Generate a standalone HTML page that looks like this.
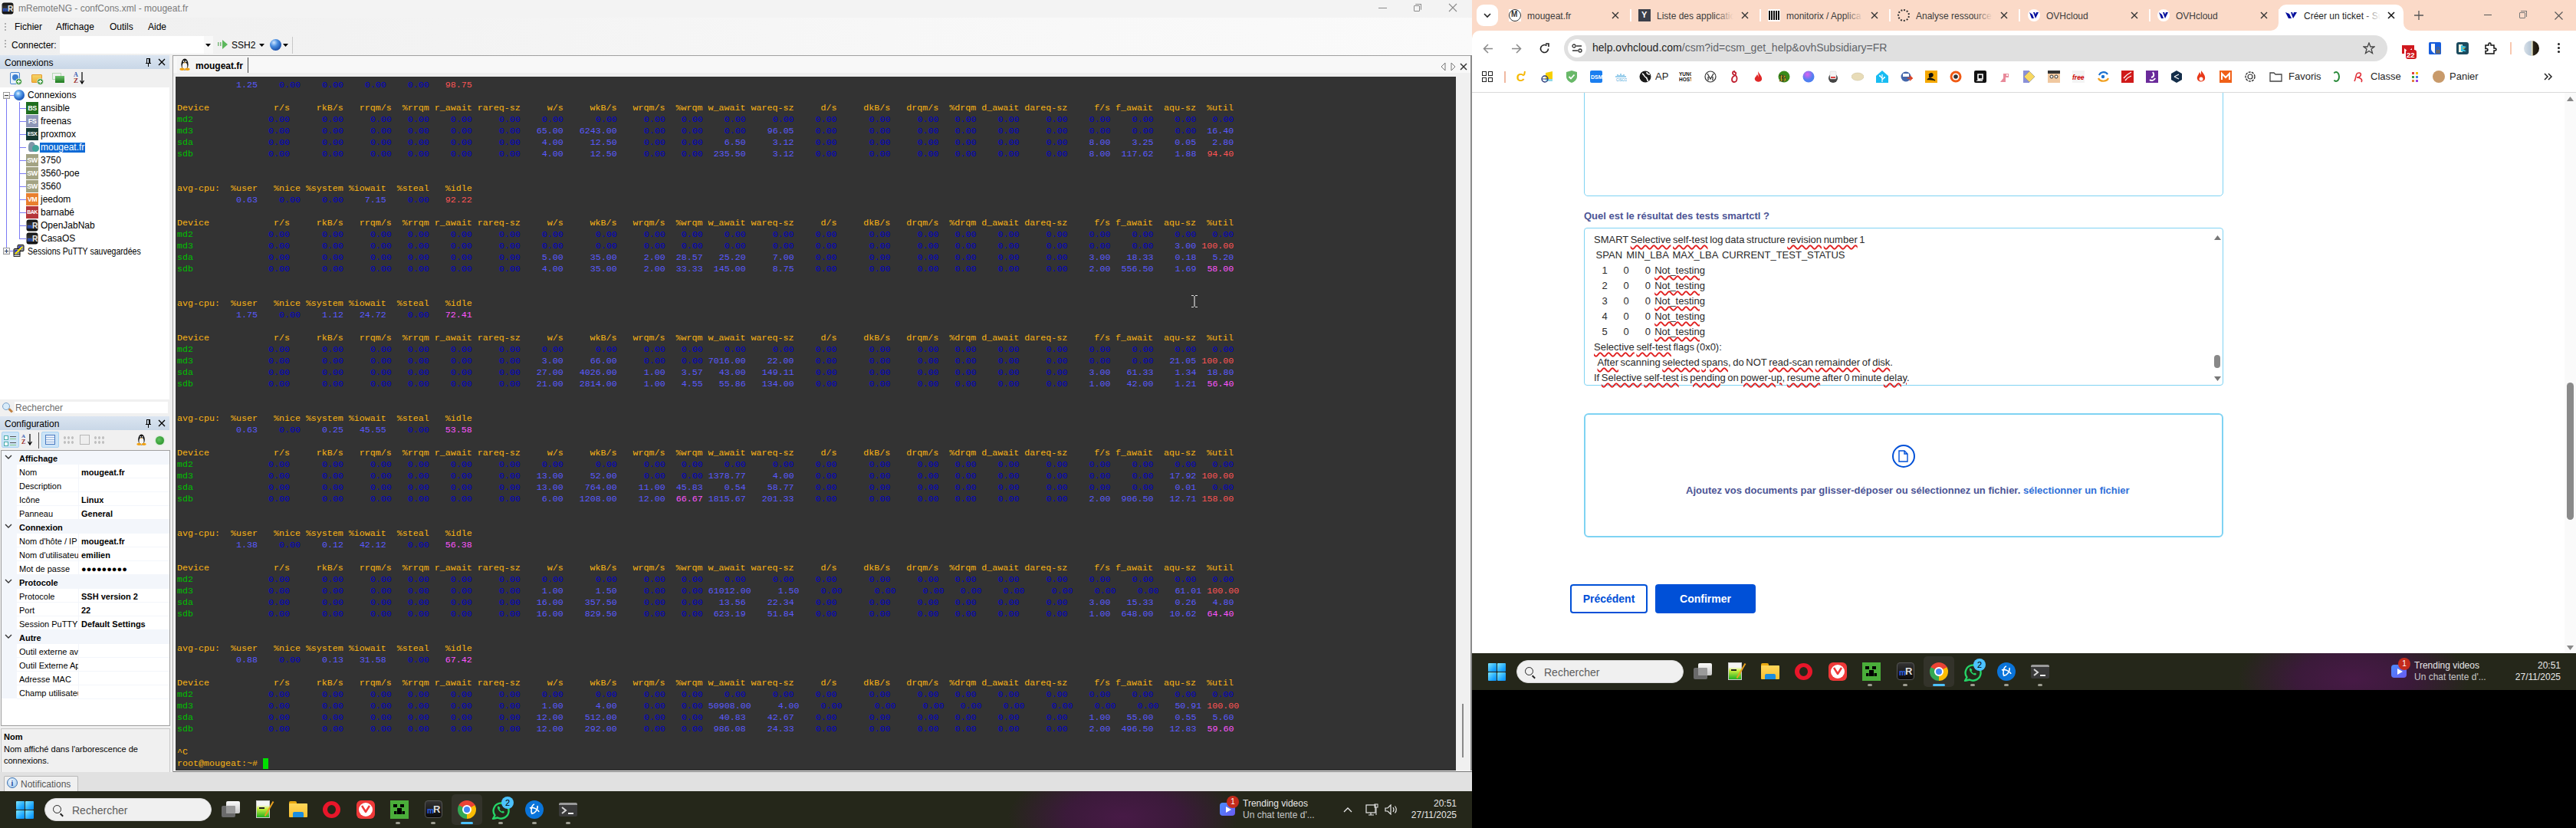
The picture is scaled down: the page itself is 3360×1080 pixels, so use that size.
<!DOCTYPE html>
<html><head><meta charset="utf-8">
<style>
*{margin:0;padding:0;box-sizing:border-box}
html,body{width:3360px;height:1080px;overflow:hidden;background:#000;font-family:"Liberation Sans",sans-serif;font-size:12px;color:#000}
.a{position:absolute}
.t{position:absolute;white-space:nowrap;line-height:1}
#L{position:absolute;left:0;top:0;width:1920px;height:1080px;background:#f0f0f0;overflow:hidden}
#R{position:absolute;left:1920px;top:0;width:1440px;height:1080px;background:#000;overflow:hidden}
#term{position:absolute;left:229px;top:100px;width:1670px;height:905px;background:#333;overflow:hidden}
.tl{position:absolute;left:2px;height:15px;line-height:15px;white-space:pre;font-family:"Liberation Mono",monospace;font-size:11.667px;color:#fab414}
.tl i{font-style:normal}
i.y{color:#fab414} i.g{color:#00c000} i.z{color:#0000c8} i.b{color:#5a5aff} i.m{color:#ff55ff} i.r{color:#ff5555}
i.cur{background:#00e000}
.ico{position:absolute;width:16px;height:16px;color:#fff;font-weight:bold;font-size:9px;line-height:16px;text-align:center;letter-spacing:-0.5px;font-family:"Liberation Sans",sans-serif}
.tr{position:absolute;font-size:12px;white-space:nowrap;line-height:17px;height:17px}
.pg{position:absolute;font-size:11px;white-space:nowrap;line-height:17px;height:17px;overflow:hidden;padding-top:2px}
.pb{font-weight:bold}
.tb{position:absolute;width:24px;height:24px}
.ta{font-size:13px;color:#2a2a2a;white-space:pre;word-spacing:-1px;line-height:16px}
.ta u{text-decoration:underline wavy #e02020;text-decoration-thickness:1.5px;text-underline-offset:2px}
</style></head><body>
<div id="L">
  <!-- title bar -->
  <div class="a" style="left:0;top:0;width:1920px;height:23px;background:#f3f3f3"></div>
  <svg class="a" style="left:2px;top:3px" width="16" height="16"><defs><linearGradient id="mrt" x1="0" y1="0" x2="0" y2="1"><stop offset="0" stop-color="#111"/><stop offset="0.5" stop-color="#3a3a3a"/><stop offset="1" stop-color="#0a0a0a"/></linearGradient></defs><rect x="0.5" y="0.5" width="15" height="15" rx="3" fill="url(#mrt)"/><text x="2" y="12" font-size="7" font-weight="bold" fill="#2a60f0" font-family="Liberation Sans">m</text><text x="8" y="12" font-size="10" font-weight="bold" fill="#e8e8e8" font-family="Liberation Sans">R</text></svg>
  <div class="t" style="left:24px;top:5px;font-size:12px;color:#7a7a7a">mRemoteNG - confCons.xml - mougeat.fr</div>
  <div class="a" style="left:1798px;top:10px;width:11px;height:1px;background:#8a8a8a"></div>
  <div class="a" style="left:1844px;top:7px;width:8px;height:8px;border:1px solid #8a8a8a;border-radius:1px"></div>
  <div class="a" style="left:1846px;top:5px;width:8px;height:8px;border-top:1px solid #8a8a8a;border-right:1px solid #8a8a8a;border-radius:1px"></div>
  <svg class="a" style="left:1889px;top:4px" width="12" height="12"><path d="M1 1L11 11M11 1L1 11" stroke="#8a8a8a" stroke-width="1.1"/></svg>
  <!-- menu + toolbar bg -->
  <div class="a" style="left:0;top:23px;width:1920px;height:49px;background:linear-gradient(90deg,#efefef 0%,#f3f3f3 30%,#f7f7f7 60%,#fafafa 100%)"></div>
  <div class="a" style="left:6px;top:30px;width:2px;height:12px;background:repeating-linear-gradient(180deg,#b0b0b0 0 2px,transparent 2px 4px)"></div>
  <div class="t" style="left:19px;top:29px;font-size:12px">Fichier</div>
  <div class="t" style="left:73px;top:29px;font-size:12px">Affichage</div>
  <div class="t" style="left:143px;top:29px;font-size:12px">Outils</div>
  <div class="t" style="left:193px;top:29px;font-size:12px">Aide</div>
  <div class="a" style="left:6px;top:52px;width:2px;height:12px;background:repeating-linear-gradient(180deg,#b0b0b0 0 2px,transparent 2px 4px)"></div>
  <div class="t" style="left:15px;top:53px;font-size:12px">Connecter:</div>
  <div class="a" style="left:78px;top:47px;width:188px;height:23px;background:#fff"></div>
  <div class="a" style="left:266px;top:47px;width:12px;height:23px;background:#f8f8f8"></div>
  <svg class="a" style="left:268px;top:57px" width="8" height="5"><path d="M0 0H7L3.5 4Z" fill="#000"/></svg>
  <svg class="a" style="left:284px;top:52px" width="14" height="12"><rect x="0" y="3" width="1.5" height="5" fill="#7ab87a"/><rect x="3" y="3" width="1.5" height="5" fill="#7ab87a"/><path d="M6 0L13 6L6 12Z" fill="#5cb85c"/></svg>
  <div class="t" style="left:302px;top:53px;font-size:12px">SSH2</div>
  <svg class="a" style="left:338px;top:57px" width="8" height="5"><path d="M0 0H7L3.5 4Z" fill="#000"/></svg>
  <div class="a" style="left:352px;top:51px;width:15px;height:15px;border-radius:50%;background:radial-gradient(circle at 35% 30%,#cfe6ff 0%,#4a8ee0 35%,#1b4fa8 75%,#0d2f70 100%)"></div>
  <svg class="a" style="left:369px;top:57px" width="8" height="5"><path d="M0 0H7L3.5 4Z" fill="#000"/></svg>
  <div class="a" style="left:381px;top:48px;width:1px;height:22px;background:#c8c8c8"></div>
<div class="a" style="left:0;top:72px;width:221px;height:18px;background:linear-gradient(180deg,#dbe5f1,#c9d7e7)"></div>
<div class="t" style="left:6px;top:76px;font-size:12px">Connexions</div>
<svg class="a" style="left:189px;top:76px" width="9" height="11"><path d="M2 0H7V6H8V7H5V11H4V7H1V6H2Z" fill="#000"/><rect x="3" y="1" width="2" height="5" fill="#d0dcea"/></svg>
<svg class="a" style="left:206px;top:76px" width="10" height="10"><path d="M1 1L9 9M9 1L1 9" stroke="#000" stroke-width="1.3"/></svg>
<div class="a" style="left:0;top:90px;width:221px;height:24px;background:#f0f0f0"></div>
<div class="a" style="left:13px;top:94px;width:13px;height:16px;border:1.5px solid #4a86d0;border-radius:2px;background:#e6f0fb"></div>
<div class="a" style="left:16px;top:97px;width:8px;height:8px;border-radius:50%;background:#3d7fd0"></div>
<svg class="a" style="left:20px;top:102px" width="9" height="9"><circle cx="4.5" cy="4.5" r="4" fill="#2e8b2e" stroke="#fff" stroke-width="0.8"/><path d="M4.5 2V7M2 4.5H7" stroke="#fff" stroke-width="1.3"/></svg>
<div class="a" style="left:41px;top:97px;width:14px;height:11px;background:linear-gradient(180deg,#f5d36a,#eeb43a);border:1px solid #e59a2a;border-radius:1px"></div>
<svg class="a" style="left:48px;top:102px" width="9" height="9"><circle cx="4.5" cy="4.5" r="4" fill="#2e8b2e" stroke="#fff" stroke-width="0.8"/><path d="M4.5 2V7M2 4.5H7" stroke="#fff" stroke-width="1.3"/></svg>
<div class="a" style="left:68px;top:95px;width:12px;height:9px;border:1px solid #b5d8b5"></div>
<div class="a" style="left:72px;top:99px;width:12px;height:9px;background:linear-gradient(180deg,#6cc06c,#1f7a1f)"></div>
<div class="t" style="left:96px;top:94px;font-size:8px;font-weight:bold;color:#3558b0;font-family:'Liberation Serif',serif">A</div>
<div class="t" style="left:96px;top:101px;font-size:9px;font-weight:bold;color:#9a3030;font-family:'Liberation Serif',serif">Z</div>
<svg class="a" style="left:104px;top:94px" width="6" height="16"><path d="M3 0V14M0.5 11L3 15L5.5 11" stroke="#000" stroke-width="1.2" fill="none"/></svg>
<div class="a" style="left:0;top:114px;width:221px;height:407px;background:#fff"></div>
<div class="a" style="left:8px;top:128px;width:1px;height:195px;background:#7b7bf5"></div>
<div class="a" style="left:13px;top:124px;width:5px;height:1px;background:#7b7bf5"></div>
<div class="a" style="left:25px;top:133px;width:1px;height:179px;background:#7b7bf5"></div>
<div class="a" style="left:25px;top:141px;width:9px;height:1px;background:#7b7bf5"></div>
<div class="a" style="left:25px;top:158px;width:9px;height:1px;background:#7b7bf5"></div>
<div class="a" style="left:25px;top:175px;width:9px;height:1px;background:#7b7bf5"></div>
<div class="a" style="left:25px;top:192px;width:9px;height:1px;background:#7b7bf5"></div>
<div class="a" style="left:25px;top:209px;width:9px;height:1px;background:#7b7bf5"></div>
<div class="a" style="left:25px;top:226px;width:9px;height:1px;background:#7b7bf5"></div>
<div class="a" style="left:25px;top:243px;width:9px;height:1px;background:#7b7bf5"></div>
<div class="a" style="left:25px;top:260px;width:9px;height:1px;background:#7b7bf5"></div>
<div class="a" style="left:25px;top:277px;width:9px;height:1px;background:#7b7bf5"></div>
<div class="a" style="left:25px;top:294px;width:9px;height:1px;background:#7b7bf5"></div>
<div class="a" style="left:25px;top:311px;width:9px;height:1px;background:#7b7bf5"></div>
<div class="a" style="left:13px;top:327px;width:4px;height:1px;background:#7b7bf5"></div>
<div class="a" style="left:4px;top:120px;width:9px;height:9px;border:1px solid #999;background:linear-gradient(180deg,#fff,#e4e4e4)"></div><div class="a" style="left:6px;top:124px;width:5px;height:1px;background:#333"></div>
<div class="a" style="left:4px;top:323px;width:9px;height:9px;border:1px solid #999;background:linear-gradient(180deg,#fff,#e4e4e4)"></div><div class="a" style="left:6px;top:327px;width:5px;height:1px;background:#333"></div><div class="a" style="left:8px;top:325px;width:1px;height:5px;background:#2a4a8a"></div>
<div class="a" style="left:18px;top:117px;width:14px;height:14px;border-radius:50%;background:radial-gradient(circle at 40% 35%,#e8f4ff 0%,#6aaef0 25%,#2767c8 60%,#0d3a8a 100%)"></div>
<div class="tr" style="left:36px;top:116px">Connexions</div>
<div class="ico" style="left:34px;top:133px;background:#1f6e1f;font-size:9px">BS</div>
<div class="tr" style="left:53px;top:133px">ansible</div>
<div class="ico" style="left:34px;top:150px;background:#8d96b8;font-size:9px">FS</div>
<div class="tr" style="left:53px;top:150px">freenas</div>
<div class="ico" style="left:34px;top:167px;background:#163a33;font-size:7px">ESX</div>
<div class="tr" style="left:53px;top:167px">proxmox</div>
<div class="a" style="left:37px;top:185px;width:9px;height:13px;border-radius:45% 45% 30% 30%;background:#7f96a8"></div>
<div class="a" style="left:42px;top:189px;width:9px;height:9px;border-radius:50%;background:#3fa59a"></div>
<div class="a" style="left:52px;top:186px;width:59px;height:13px;background:#0c6ad6"></div>
<div class="tr" style="left:53px;top:184px;color:#fff">mougeat.fr</div>
<div class="ico" style="left:34px;top:201px;background:#a3a383;font-size:9px">SW</div>
<div class="tr" style="left:53px;top:201px">3750</div>
<div class="ico" style="left:34px;top:218px;background:#a3a383;font-size:9px">SW</div>
<div class="tr" style="left:53px;top:218px">3560-poe</div>
<div class="ico" style="left:34px;top:235px;background:#a3a383;font-size:9px">SW</div>
<div class="tr" style="left:53px;top:235px">3560</div>
<div class="ico" style="left:34px;top:252px;background:#e97f2e;font-size:9px">VM</div>
<div class="tr" style="left:53px;top:252px">jeedom</div>
<div class="ico" style="left:34px;top:269px;background:#b5363a;font-size:7px">BAK</div>
<div class="tr" style="left:53px;top:269px">barnabé</div>
<svg class="a" style="left:34px;top:286px" width="16" height="16"><defs><linearGradient id="mrg10" x1="0" y1="0" x2="0" y2="1"><stop offset="0" stop-color="#111"/><stop offset="0.5" stop-color="#3a3a3a"/><stop offset="1" stop-color="#0a0a0a"/></linearGradient></defs><rect x="0.5" y="0.5" width="15" height="15" rx="3" fill="url(#mrg10)"/><text x="2" y="12" font-size="7" font-weight="bold" fill="#2a60f0" font-family="Liberation Sans">m</text><text x="8" y="12" font-size="10" font-weight="bold" fill="#e8e8e8" font-family="Liberation Sans">R</text></svg>
<div class="tr" style="left:53px;top:286px">OpenJabNab</div>
<svg class="a" style="left:34px;top:303px" width="16" height="16"><defs><linearGradient id="mrg11" x1="0" y1="0" x2="0" y2="1"><stop offset="0" stop-color="#111"/><stop offset="0.5" stop-color="#3a3a3a"/><stop offset="1" stop-color="#0a0a0a"/></linearGradient></defs><rect x="0.5" y="0.5" width="15" height="15" rx="3" fill="url(#mrg11)"/><text x="2" y="12" font-size="7" font-weight="bold" fill="#2a60f0" font-family="Liberation Sans">m</text><text x="8" y="12" font-size="10" font-weight="bold" fill="#e8e8e8" font-family="Liberation Sans">R</text></svg>
<div class="tr" style="left:53px;top:303px">CasaOS</div>
<svg class="a" style="left:17px;top:319px" width="17" height="16"><rect x="6" y="0.5" width="8" height="8" rx="1" fill="#999" stroke="#000" stroke-width="1"/><rect x="7.5" y="2" width="4.5" height="4" fill="#1a2ad8"/><rect x="1" y="5.5" width="8" height="8" rx="1" fill="#999" stroke="#000" stroke-width="1"/><rect x="2.5" y="7" width="4.5" height="4" fill="#1a2ad8"/><rect x="1" y="13" width="8" height="2.5" fill="#ddd" stroke="#000" stroke-width="0.8"/><path d="M3 12L12 3" stroke="#f8e800" stroke-width="2.2"/></svg>
<div class="tr" style="left:36px;top:320px;transform:scaleX(0.88);transform-origin:0 0">Sessions PuTTY sauvegardées</div>
<div class="a" style="left:0;top:521px;width:221px;height:22px;background:#f0f0f0"></div>
<div class="a" style="left:3px;top:525px;width:10px;height:10px;border-radius:50%;border:1.5px solid #7aa0c8;background:#d8ecfa"></div>
<div class="a" style="left:11px;top:534px;width:6px;height:2.5px;background:#c08040;transform:rotate(45deg)"></div>
<div class="a" style="left:19px;top:524px;width:200px;height:15px;background:#fff"></div>
<div class="t" style="left:20px;top:526px;font-size:12px;color:#6d6d6d">Rechercher</div>
<div class="a" style="left:0;top:543px;width:221px;height:18px;background:linear-gradient(180deg,#dbe5f1,#c9d7e7)"></div>
<div class="t" style="left:6px;top:547px;font-size:12px">Configuration</div>
<svg class="a" style="left:189px;top:547px" width="9" height="11"><path d="M2 0H7V6H8V7H5V11H4V7H1V6H2Z" fill="#000"/><rect x="3" y="1" width="2" height="5" fill="#d0dcea"/></svg>
<svg class="a" style="left:206px;top:547px" width="10" height="10"><path d="M1 1L9 9M9 1L1 9" stroke="#000" stroke-width="1.3"/></svg>
<div class="a" style="left:0;top:561px;width:221px;height:26px;background:#f0f0f0"></div>
<div class="a" style="left:2px;top:563px;width:23px;height:21px;background:#cce4f7;border:1px solid #a8d2f2;border-radius:2px"></div>
<div class="a" style="left:5px;top:568px;width:6px;height:6px;border:1px solid #4aa;background:#fff"></div>
<div class="a" style="left:13px;top:569px;width:8px;height:1px;background:#555"></div>
<div class="a" style="left:13px;top:572px;width:8px;height:1px;background:#8c8"></div>
<div class="a" style="left:5px;top:576px;width:6px;height:6px;border:1px solid #4aa;background:#fff"></div>
<div class="a" style="left:13px;top:577px;width:8px;height:1px;background:#555"></div>
<div class="a" style="left:13px;top:580px;width:8px;height:1px;background:#8c8"></div>
<div class="t" style="left:28px;top:566px;font-size:7px;font-weight:bold;color:#3558b0;font-family:'Liberation Serif',serif">A</div>
<div class="t" style="left:28px;top:573px;font-size:8px;font-weight:bold;color:#9a3030;font-family:'Liberation Serif',serif">Z</div>
<svg class="a" style="left:36px;top:566px" width="6" height="16"><path d="M3 0V13M0.5 10L3 14L5.5 10" stroke="#000" stroke-width="1.2" fill="none"/></svg>
<div class="a" style="left:50px;top:564px;width:1px;height:21px;background:#555"></div>
<div class="a" style="left:54px;top:563px;width:23px;height:21px;background:#cce4f7;border:1px solid #a8d2f2;border-radius:2px"></div>
<div class="a" style="left:59px;top:567px;width:13px;height:13px;border:1px solid #4a7ac0;background:repeating-linear-gradient(180deg,#e8f0fa 0 2px,#9ab8e0 2px 3px)"></div>
<div class="a" style="left:82px;top:568px;width:15px;height:12px;opacity:.45;background:radial-gradient(circle,#888 1.5px,transparent 2px) 0 0/5px 6px"></div>
<div class="a" style="left:104px;top:567px;width:13px;height:13px;border:1px solid #aaa;background:#eee;opacity:.8"></div>
<div class="a" style="left:122px;top:568px;width:15px;height:12px;opacity:.45;background:radial-gradient(circle,#888 1.5px,transparent 2px) 0 0/5px 6px"></div>
<svg class="a" style="left:178px;top:566px" width="13" height="15" viewBox="0 0 14 16"><ellipse cx="7" cy="8" rx="4.6" ry="7.6" fill="#151515"/><ellipse cx="7" cy="10.2" rx="3.3" ry="4.8" fill="#f4f4f4"/><circle cx="5.6" cy="4" r="0.9" fill="#fff"/><circle cx="8.4" cy="4" r="0.9" fill="#fff"/><path d="M5.6 5.6H8.4L7 7Z" fill="#f0a010"/><ellipse cx="3.6" cy="14.3" rx="3.2" ry="1.7" fill="#f0a010"/><ellipse cx="10.4" cy="14.3" rx="3.2" ry="1.7" fill="#f0a010"/></svg>
<div class="a" style="left:203px;top:569px;width:11px;height:11px;border-radius:50%;background:radial-gradient(circle at 40% 40%,#5fc05f,#1f8a1f);box-shadow:0 0 2px #8d8"></div>
<div class="a" style="left:1px;top:587px;width:221px;height:360px;background:#fff;border:1px solid #a0a0a0"></div>
<div class="a" style="left:2px;top:588px;width:20px;height:323px;background:#f3f6fb"></div>
<div class="a" style="left:2px;top:588px;width:219px;height:18px;background:#f3f6fb"></div>
<svg class="a" style="left:6px;top:593px" width="10" height="6"><path d="M1 1L5 5L9 1" stroke="#333" stroke-width="1.4" fill="none"/></svg>
<div class="pg pb" style="left:25px;top:588px;font-size:11px">Affichage</div>
<div class="a" style="left:22px;top:623px;width:199px;height:1px;background:#f3f6fb"></div>
<div class="a" style="left:102px;top:606px;width:1px;height:17px;background:#f3f6fb"></div>
<div class="pg" style="left:25px;top:606px;width:77px">Nom</div>
<div class="pg pb" style="left:106px;top:606px">mougeat.fr</div>
<div class="a" style="left:22px;top:641px;width:199px;height:1px;background:#f3f6fb"></div>
<div class="a" style="left:102px;top:624px;width:1px;height:17px;background:#f3f6fb"></div>
<div class="pg" style="left:25px;top:624px;width:77px">Description</div>
<div class="a" style="left:22px;top:659px;width:199px;height:1px;background:#f3f6fb"></div>
<div class="a" style="left:102px;top:642px;width:1px;height:17px;background:#f3f6fb"></div>
<div class="pg" style="left:25px;top:642px;width:77px">Icône</div>
<div class="pg pb" style="left:106px;top:642px">Linux</div>
<div class="a" style="left:22px;top:677px;width:199px;height:1px;background:#f3f6fb"></div>
<div class="a" style="left:102px;top:660px;width:1px;height:17px;background:#f3f6fb"></div>
<div class="pg" style="left:25px;top:660px;width:77px">Panneau</div>
<div class="pg pb" style="left:106px;top:660px">General</div>
<div class="a" style="left:2px;top:678px;width:219px;height:18px;background:#f3f6fb"></div>
<svg class="a" style="left:6px;top:683px" width="10" height="6"><path d="M1 1L5 5L9 1" stroke="#333" stroke-width="1.4" fill="none"/></svg>
<div class="pg pb" style="left:25px;top:678px;font-size:11px">Connexion</div>
<div class="a" style="left:22px;top:713px;width:199px;height:1px;background:#f3f6fb"></div>
<div class="a" style="left:102px;top:696px;width:1px;height:17px;background:#f3f6fb"></div>
<div class="pg" style="left:25px;top:696px;width:77px">Nom d'hôte / IP</div>
<div class="pg pb" style="left:106px;top:696px">mougeat.fr</div>
<div class="a" style="left:22px;top:731px;width:199px;height:1px;background:#f3f6fb"></div>
<div class="a" style="left:102px;top:714px;width:1px;height:17px;background:#f3f6fb"></div>
<div class="pg" style="left:25px;top:714px;width:77px">Nom d'utilisateur</div>
<div class="pg pb" style="left:106px;top:714px">emilien</div>
<div class="a" style="left:22px;top:749px;width:199px;height:1px;background:#f3f6fb"></div>
<div class="a" style="left:102px;top:732px;width:1px;height:17px;background:#f3f6fb"></div>
<div class="pg" style="left:25px;top:732px;width:77px">Mot de passe</div>
<div class="pg pb" style="left:106px;top:732px">●●●●●●●●●</div>
<div class="a" style="left:2px;top:750px;width:219px;height:18px;background:#f3f6fb"></div>
<svg class="a" style="left:6px;top:755px" width="10" height="6"><path d="M1 1L5 5L9 1" stroke="#333" stroke-width="1.4" fill="none"/></svg>
<div class="pg pb" style="left:25px;top:750px;font-size:11px">Protocole</div>
<div class="a" style="left:22px;top:785px;width:199px;height:1px;background:#f3f6fb"></div>
<div class="a" style="left:102px;top:768px;width:1px;height:17px;background:#f3f6fb"></div>
<div class="pg" style="left:25px;top:768px;width:77px">Protocole</div>
<div class="pg pb" style="left:106px;top:768px">SSH version 2</div>
<div class="a" style="left:22px;top:803px;width:199px;height:1px;background:#f3f6fb"></div>
<div class="a" style="left:102px;top:786px;width:1px;height:17px;background:#f3f6fb"></div>
<div class="pg" style="left:25px;top:786px;width:77px">Port</div>
<div class="pg pb" style="left:106px;top:786px">22</div>
<div class="a" style="left:22px;top:821px;width:199px;height:1px;background:#f3f6fb"></div>
<div class="a" style="left:102px;top:804px;width:1px;height:17px;background:#f3f6fb"></div>
<div class="pg" style="left:25px;top:804px;width:77px">Session PuTTY</div>
<div class="pg pb" style="left:106px;top:804px">Default Settings</div>
<div class="a" style="left:2px;top:822px;width:219px;height:18px;background:#f3f6fb"></div>
<svg class="a" style="left:6px;top:827px" width="10" height="6"><path d="M1 1L5 5L9 1" stroke="#333" stroke-width="1.4" fill="none"/></svg>
<div class="pg pb" style="left:25px;top:822px;font-size:11px">Autre</div>
<div class="a" style="left:22px;top:857px;width:199px;height:1px;background:#f3f6fb"></div>
<div class="a" style="left:102px;top:840px;width:1px;height:17px;background:#f3f6fb"></div>
<div class="pg" style="left:25px;top:840px;width:77px">Outil externe avant</div>
<div class="a" style="left:22px;top:875px;width:199px;height:1px;background:#f3f6fb"></div>
<div class="a" style="left:102px;top:858px;width:1px;height:17px;background:#f3f6fb"></div>
<div class="pg" style="left:25px;top:858px;width:77px">Outil Externe Après</div>
<div class="a" style="left:22px;top:893px;width:199px;height:1px;background:#f3f6fb"></div>
<div class="a" style="left:102px;top:876px;width:1px;height:17px;background:#f3f6fb"></div>
<div class="pg" style="left:25px;top:876px;width:77px">Adresse MAC</div>
<div class="a" style="left:22px;top:911px;width:199px;height:1px;background:#f3f6fb"></div>
<div class="a" style="left:102px;top:894px;width:1px;height:17px;background:#f3f6fb"></div>
<div class="pg" style="left:25px;top:894px;width:77px">Champ utilisateur</div>
<div class="a" style="left:1px;top:950px;width:221px;height:58px;background:#f0f0f0;border:1px solid #c8c8c8"></div>
<div class="t" style="left:5px;top:956px;font-size:11px;font-weight:bold">Nom</div>
<div class="t" style="left:5px;top:972px;font-size:11px">Nom affiché dans l'arborescence de</div>
<div class="t" style="left:5px;top:987px;font-size:11px">connexions.</div>  <!-- tab area -->
  <div class="a" style="left:225px;top:72px;width:1695px;height:935px;background:#f8f8f8;border-top:1px solid #a0a0a0;border-left:1px solid #a0a0a0"></div>
  <div class="a" style="left:231px;top:75px;width:92px;height:20px;background:#f4f4f4"></div>
  <div class="a" style="left:323px;top:75px;width:1px;height:20px;background:#444"></div>
  <svg class="a" style="left:234px;top:76px" width="14" height="16" viewBox="0 0 14 16"><ellipse cx="7" cy="8" rx="4.6" ry="7.6" fill="#151515"/><ellipse cx="7" cy="10.2" rx="3.3" ry="4.8" fill="#f4f4f4"/><circle cx="5.6" cy="4" r="0.9" fill="#fff"/><circle cx="8.4" cy="4" r="0.9" fill="#fff"/><path d="M5.6 5.6H8.4L7 7Z" fill="#f0a010"/><ellipse cx="3.6" cy="14.3" rx="3.2" ry="1.7" fill="#f0a010"/><ellipse cx="10.4" cy="14.3" rx="3.2" ry="1.7" fill="#f0a010"/></svg>
  <div class="t" style="left:255px;top:80px;font-size:12px;font-weight:bold">mougeat.fr</div>
  <svg class="a" style="left:1879px;top:81px" width="40" height="12"><path d="M6 1L1 6L6 11Z" fill="none" stroke="#777"/><path d="M14 1L19 6L14 11Z" fill="none" stroke="#777"/><path d="M26 2L34 10M34 2L26 10" stroke="#333" stroke-width="1.5"/></svg>
  <div class="a" style="left:226px;top:95px;width:1694px;height:5px;background:#f0f0f0"></div>
  <div class="a" style="left:1899px;top:100px;width:19px;height:905px;background:#f0f0f0"></div>
  <div class="a" style="left:1907px;top:918px;width:2px;height:70px;background:#8a8a8a"></div>
  <div class="a" style="left:1918px;top:72px;width:2px;height:935px;background:#8a8a8a"></div>
  <div class="a" style="left:226px;top:1005px;width:1694px;height:1px;background:#f8f8f8"></div><div class="a" style="left:226px;top:1006px;width:1694px;height:1px;background:#777"></div>
  <div id="term">
<div class="tl" style="top:4px">           <i class="b">1.25</i>    <i class="z">0.00</i>    <i class="z">0.00</i>    <i class="z">0.00</i>    <i class="z">0.00</i>   <i class="r">98.75</i></div>
<div class="tl" style="top:19px"></div>
<div class="tl" style="top:34px"><i class="y">Device            r/s     rkB/s   rrqm/s  %rrqm r_await rareq-sz     w/s     wkB/s   wrqm/s  %wrqm w_await wareq-sz     d/s     dkB/s   drqm/s  %drqm d_await dareq-sz     f/s f_await  aqu-sz  %util</i></div>
<div class="tl" style="top:49px"><i class="g">md2</i>              <i class="z">0.00</i>      <i class="z">0.00</i>     <i class="z">0.00</i>   <i class="z">0.00</i>    <i class="z">0.00</i>     <i class="z">0.00</i>    <i class="z">0.00</i>      <i class="z">0.00</i>     <i class="z">0.00</i>   <i class="z">0.00</i>    <i class="z">0.00</i>     <i class="z">0.00</i>    <i class="z">0.00</i>      <i class="z">0.00</i>     <i class="z">0.00</i>   <i class="z">0.00</i>    <i class="z">0.00</i>     <i class="z">0.00</i>    <i class="z">0.00</i>    <i class="z">0.00</i>    <i class="z">0.00</i>   <i class="z">0.00</i></div>
<div class="tl" style="top:64px"><i class="g">md3</i>              <i class="z">0.00</i>      <i class="z">0.00</i>     <i class="z">0.00</i>   <i class="z">0.00</i>    <i class="z">0.00</i>     <i class="z">0.00</i>   <i class="b">65.00</i>   <i class="b">6243.00</i>     <i class="z">0.00</i>   <i class="z">0.00</i>    <i class="z">0.00</i>    <i class="b">96.05</i>    <i class="z">0.00</i>      <i class="z">0.00</i>     <i class="z">0.00</i>   <i class="z">0.00</i>    <i class="z">0.00</i>     <i class="z">0.00</i>    <i class="z">0.00</i>    <i class="z">0.00</i>    <i class="z">0.00</i>  <i class="b">16.40</i></div>
<div class="tl" style="top:79px"><i class="g">sda</i>              <i class="z">0.00</i>      <i class="z">0.00</i>     <i class="z">0.00</i>   <i class="z">0.00</i>    <i class="z">0.00</i>     <i class="z">0.00</i>    <i class="b">4.00</i>     <i class="b">12.50</i>     <i class="z">0.00</i>   <i class="z">0.00</i>    <i class="b">6.50</i>     <i class="b">3.12</i>    <i class="z">0.00</i>      <i class="z">0.00</i>     <i class="z">0.00</i>   <i class="z">0.00</i>    <i class="z">0.00</i>     <i class="z">0.00</i>    <i class="b">8.00</i>    <i class="b">3.25</i>    <i class="b">0.05</i>   <i class="b">2.80</i></div>
<div class="tl" style="top:94px"><i class="g">sdb</i>              <i class="z">0.00</i>      <i class="z">0.00</i>     <i class="z">0.00</i>   <i class="z">0.00</i>    <i class="z">0.00</i>     <i class="z">0.00</i>    <i class="b">4.00</i>     <i class="b">12.50</i>     <i class="z">0.00</i>   <i class="z">0.00</i>  <i class="b">235.50</i>     <i class="b">3.12</i>    <i class="z">0.00</i>      <i class="z">0.00</i>     <i class="z">0.00</i>   <i class="z">0.00</i>    <i class="z">0.00</i>     <i class="z">0.00</i>    <i class="b">8.00</i>  <i class="b">117.62</i>    <i class="b">1.88</i>  <i class="r">94.40</i></div>
<div class="tl" style="top:109px"></div>
<div class="tl" style="top:124px"></div>
<div class="tl" style="top:139px"><i class="y">avg-cpu:  %user   %nice %system %iowait  %steal   %idle</i></div>
<div class="tl" style="top:154px">           <i class="b">0.63</i>    <i class="z">0.00</i>    <i class="z">0.00</i>    <i class="b">7.15</i>    <i class="z">0.00</i>   <i class="r">92.22</i></div>
<div class="tl" style="top:169px"></div>
<div class="tl" style="top:184px"><i class="y">Device            r/s     rkB/s   rrqm/s  %rrqm r_await rareq-sz     w/s     wkB/s   wrqm/s  %wrqm w_await wareq-sz     d/s     dkB/s   drqm/s  %drqm d_await dareq-sz     f/s f_await  aqu-sz  %util</i></div>
<div class="tl" style="top:199px"><i class="g">md2</i>              <i class="z">0.00</i>      <i class="z">0.00</i>     <i class="z">0.00</i>   <i class="z">0.00</i>    <i class="z">0.00</i>     <i class="z">0.00</i>    <i class="z">0.00</i>      <i class="z">0.00</i>     <i class="z">0.00</i>   <i class="z">0.00</i>    <i class="z">0.00</i>     <i class="z">0.00</i>    <i class="z">0.00</i>      <i class="z">0.00</i>     <i class="z">0.00</i>   <i class="z">0.00</i>    <i class="z">0.00</i>     <i class="z">0.00</i>    <i class="z">0.00</i>    <i class="z">0.00</i>    <i class="z">0.00</i>   <i class="z">0.00</i></div>
<div class="tl" style="top:214px"><i class="g">md3</i>              <i class="z">0.00</i>      <i class="z">0.00</i>     <i class="z">0.00</i>   <i class="z">0.00</i>    <i class="z">0.00</i>     <i class="z">0.00</i>    <i class="z">0.00</i>      <i class="z">0.00</i>     <i class="z">0.00</i>   <i class="z">0.00</i>    <i class="z">0.00</i>     <i class="z">0.00</i>    <i class="z">0.00</i>      <i class="z">0.00</i>     <i class="z">0.00</i>   <i class="z">0.00</i>    <i class="z">0.00</i>     <i class="z">0.00</i>    <i class="z">0.00</i>    <i class="z">0.00</i>    <i class="b">3.00</i> <i class="r">100.00</i></div>
<div class="tl" style="top:229px"><i class="g">sda</i>              <i class="z">0.00</i>      <i class="z">0.00</i>     <i class="z">0.00</i>   <i class="z">0.00</i>    <i class="z">0.00</i>     <i class="z">0.00</i>    <i class="b">5.00</i>     <i class="b">35.00</i>     <i class="b">2.00</i>  <i class="b">28.57</i>   <i class="b">25.20</i>     <i class="b">7.00</i>    <i class="z">0.00</i>      <i class="z">0.00</i>     <i class="z">0.00</i>   <i class="z">0.00</i>    <i class="z">0.00</i>     <i class="z">0.00</i>    <i class="b">3.00</i>   <i class="b">18.33</i>    <i class="b">0.18</i>   <i class="b">5.20</i></div>
<div class="tl" style="top:244px"><i class="g">sdb</i>              <i class="z">0.00</i>      <i class="z">0.00</i>     <i class="z">0.00</i>   <i class="z">0.00</i>    <i class="z">0.00</i>     <i class="z">0.00</i>    <i class="b">4.00</i>     <i class="b">35.00</i>     <i class="b">2.00</i>  <i class="b">33.33</i>  <i class="b">145.00</i>     <i class="b">8.75</i>    <i class="z">0.00</i>      <i class="z">0.00</i>     <i class="z">0.00</i>   <i class="z">0.00</i>    <i class="z">0.00</i>     <i class="z">0.00</i>    <i class="b">2.00</i>  <i class="b">556.50</i>    <i class="b">1.69</i>  <i class="m">58.00</i></div>
<div class="tl" style="top:259px"></div>
<div class="tl" style="top:274px"></div>
<div class="tl" style="top:289px"><i class="y">avg-cpu:  %user   %nice %system %iowait  %steal   %idle</i></div>
<div class="tl" style="top:304px">           <i class="b">1.75</i>    <i class="z">0.00</i>    <i class="b">1.12</i>   <i class="b">24.72</i>    <i class="z">0.00</i>   <i class="m">72.41</i></div>
<div class="tl" style="top:319px"></div>
<div class="tl" style="top:334px"><i class="y">Device            r/s     rkB/s   rrqm/s  %rrqm r_await rareq-sz     w/s     wkB/s   wrqm/s  %wrqm w_await wareq-sz     d/s     dkB/s   drqm/s  %drqm d_await dareq-sz     f/s f_await  aqu-sz  %util</i></div>
<div class="tl" style="top:349px"><i class="g">md2</i>              <i class="z">0.00</i>      <i class="z">0.00</i>     <i class="z">0.00</i>   <i class="z">0.00</i>    <i class="z">0.00</i>     <i class="z">0.00</i>    <i class="z">0.00</i>      <i class="z">0.00</i>     <i class="z">0.00</i>   <i class="z">0.00</i>    <i class="z">0.00</i>     <i class="z">0.00</i>    <i class="z">0.00</i>      <i class="z">0.00</i>     <i class="z">0.00</i>   <i class="z">0.00</i>    <i class="z">0.00</i>     <i class="z">0.00</i>    <i class="z">0.00</i>    <i class="z">0.00</i>    <i class="z">0.00</i>   <i class="z">0.00</i></div>
<div class="tl" style="top:364px"><i class="g">md3</i>              <i class="z">0.00</i>      <i class="z">0.00</i>     <i class="z">0.00</i>   <i class="z">0.00</i>    <i class="z">0.00</i>     <i class="z">0.00</i>    <i class="b">3.00</i>     <i class="b">66.00</i>     <i class="z">0.00</i>   <i class="z">0.00</i> <i class="b">7016.00</i>    <i class="b">22.00</i>    <i class="z">0.00</i>      <i class="z">0.00</i>     <i class="z">0.00</i>   <i class="z">0.00</i>    <i class="z">0.00</i>     <i class="z">0.00</i>    <i class="z">0.00</i>    <i class="z">0.00</i>   <i class="b">21.05</i> <i class="r">100.00</i></div>
<div class="tl" style="top:379px"><i class="g">sda</i>              <i class="z">0.00</i>      <i class="z">0.00</i>     <i class="z">0.00</i>   <i class="z">0.00</i>    <i class="z">0.00</i>     <i class="z">0.00</i>   <i class="b">27.00</i>   <i class="b">4026.00</i>     <i class="b">1.00</i>   <i class="b">3.57</i>   <i class="b">43.00</i>   <i class="b">149.11</i>    <i class="z">0.00</i>      <i class="z">0.00</i>     <i class="z">0.00</i>   <i class="z">0.00</i>    <i class="z">0.00</i>     <i class="z">0.00</i>    <i class="b">3.00</i>   <i class="b">61.33</i>    <i class="b">1.34</i>  <i class="b">18.80</i></div>
<div class="tl" style="top:394px"><i class="g">sdb</i>              <i class="z">0.00</i>      <i class="z">0.00</i>     <i class="z">0.00</i>   <i class="z">0.00</i>    <i class="z">0.00</i>     <i class="z">0.00</i>   <i class="b">21.00</i>   <i class="b">2814.00</i>     <i class="b">1.00</i>   <i class="b">4.55</i>   <i class="b">55.86</i>   <i class="b">134.00</i>    <i class="z">0.00</i>      <i class="z">0.00</i>     <i class="z">0.00</i>   <i class="z">0.00</i>    <i class="z">0.00</i>     <i class="z">0.00</i>    <i class="b">1.00</i>   <i class="b">42.00</i>    <i class="b">1.21</i>  <i class="m">56.40</i></div>
<div class="tl" style="top:409px"></div>
<div class="tl" style="top:424px"></div>
<div class="tl" style="top:439px"><i class="y">avg-cpu:  %user   %nice %system %iowait  %steal   %idle</i></div>
<div class="tl" style="top:454px">           <i class="b">0.63</i>    <i class="z">0.00</i>    <i class="b">0.25</i>   <i class="b">45.55</i>    <i class="z">0.00</i>   <i class="m">53.58</i></div>
<div class="tl" style="top:469px"></div>
<div class="tl" style="top:484px"><i class="y">Device            r/s     rkB/s   rrqm/s  %rrqm r_await rareq-sz     w/s     wkB/s   wrqm/s  %wrqm w_await wareq-sz     d/s     dkB/s   drqm/s  %drqm d_await dareq-sz     f/s f_await  aqu-sz  %util</i></div>
<div class="tl" style="top:499px"><i class="g">md2</i>              <i class="z">0.00</i>      <i class="z">0.00</i>     <i class="z">0.00</i>   <i class="z">0.00</i>    <i class="z">0.00</i>     <i class="z">0.00</i>    <i class="z">0.00</i>      <i class="z">0.00</i>     <i class="z">0.00</i>   <i class="z">0.00</i>    <i class="z">0.00</i>     <i class="z">0.00</i>    <i class="z">0.00</i>      <i class="z">0.00</i>     <i class="z">0.00</i>   <i class="z">0.00</i>    <i class="z">0.00</i>     <i class="z">0.00</i>    <i class="z">0.00</i>    <i class="z">0.00</i>    <i class="z">0.00</i>   <i class="z">0.00</i></div>
<div class="tl" style="top:514px"><i class="g">md3</i>              <i class="z">0.00</i>      <i class="z">0.00</i>     <i class="z">0.00</i>   <i class="z">0.00</i>    <i class="z">0.00</i>     <i class="z">0.00</i>   <i class="b">13.00</i>     <i class="b">52.00</i>     <i class="z">0.00</i>   <i class="z">0.00</i> <i class="b">1378.77</i>     <i class="b">4.00</i>    <i class="z">0.00</i>      <i class="z">0.00</i>     <i class="z">0.00</i>   <i class="z">0.00</i>    <i class="z">0.00</i>     <i class="z">0.00</i>    <i class="z">0.00</i>    <i class="z">0.00</i>   <i class="b">17.92</i> <i class="r">100.00</i></div>
<div class="tl" style="top:529px"><i class="g">sda</i>              <i class="z">0.00</i>      <i class="z">0.00</i>     <i class="z">0.00</i>   <i class="z">0.00</i>    <i class="z">0.00</i>     <i class="z">0.00</i>   <i class="b">13.00</i>    <i class="b">764.00</i>    <i class="b">11.00</i>  <i class="b">45.83</i>    <i class="b">0.54</i>    <i class="b">58.77</i>    <i class="z">0.00</i>      <i class="z">0.00</i>     <i class="z">0.00</i>   <i class="z">0.00</i>    <i class="z">0.00</i>     <i class="z">0.00</i>    <i class="z">0.00</i>    <i class="z">0.00</i>    <i class="b">0.01</i>   <i class="z">0.00</i></div>
<div class="tl" style="top:544px"><i class="g">sdb</i>              <i class="z">0.00</i>      <i class="z">0.00</i>     <i class="z">0.00</i>   <i class="z">0.00</i>    <i class="z">0.00</i>     <i class="z">0.00</i>    <i class="b">6.00</i>   <i class="b">1208.00</i>    <i class="b">12.00</i>  <i class="m">66.67</i> <i class="b">1815.67</i>   <i class="b">201.33</i>    <i class="z">0.00</i>      <i class="z">0.00</i>     <i class="z">0.00</i>   <i class="z">0.00</i>    <i class="z">0.00</i>     <i class="z">0.00</i>    <i class="b">2.00</i>  <i class="b">906.50</i>   <i class="b">12.71</i> <i class="r">158.00</i></div>
<div class="tl" style="top:559px"></div>
<div class="tl" style="top:574px"></div>
<div class="tl" style="top:589px"><i class="y">avg-cpu:  %user   %nice %system %iowait  %steal   %idle</i></div>
<div class="tl" style="top:604px">           <i class="b">1.38</i>    <i class="z">0.00</i>    <i class="b">0.12</i>   <i class="b">42.12</i>    <i class="z">0.00</i>   <i class="m">56.38</i></div>
<div class="tl" style="top:619px"></div>
<div class="tl" style="top:634px"><i class="y">Device            r/s     rkB/s   rrqm/s  %rrqm r_await rareq-sz     w/s     wkB/s   wrqm/s  %wrqm w_await wareq-sz     d/s     dkB/s   drqm/s  %drqm d_await dareq-sz     f/s f_await  aqu-sz  %util</i></div>
<div class="tl" style="top:649px"><i class="g">md2</i>              <i class="z">0.00</i>      <i class="z">0.00</i>     <i class="z">0.00</i>   <i class="z">0.00</i>    <i class="z">0.00</i>     <i class="z">0.00</i>    <i class="z">0.00</i>      <i class="z">0.00</i>     <i class="z">0.00</i>   <i class="z">0.00</i>    <i class="z">0.00</i>     <i class="z">0.00</i>    <i class="z">0.00</i>      <i class="z">0.00</i>     <i class="z">0.00</i>   <i class="z">0.00</i>    <i class="z">0.00</i>     <i class="z">0.00</i>    <i class="z">0.00</i>    <i class="z">0.00</i>    <i class="z">0.00</i>   <i class="z">0.00</i></div>
<div class="tl" style="top:664px"><i class="g">md3</i>              <i class="z">0.00</i>      <i class="z">0.00</i>     <i class="z">0.00</i>   <i class="z">0.00</i>    <i class="z">0.00</i>     <i class="z">0.00</i>    <i class="b">1.00</i>      <i class="b">1.50</i>     <i class="z">0.00</i>   <i class="z">0.00</i> <i class="b">61012.00</i>     <i class="b">1.50</i>    <i class="z">0.00</i>      <i class="z">0.00</i>     <i class="z">0.00</i>   <i class="z">0.00</i>    <i class="z">0.00</i>     <i class="z">0.00</i>    <i class="z">0.00</i>    <i class="z">0.00</i>   <i class="b">61.01</i> <i class="r">100.00</i></div>
<div class="tl" style="top:679px"><i class="g">sda</i>              <i class="z">0.00</i>      <i class="z">0.00</i>     <i class="z">0.00</i>   <i class="z">0.00</i>    <i class="z">0.00</i>     <i class="z">0.00</i>   <i class="b">16.00</i>    <i class="b">357.50</i>     <i class="z">0.00</i>   <i class="z">0.00</i>   <i class="b">13.56</i>    <i class="b">22.34</i>    <i class="z">0.00</i>      <i class="z">0.00</i>     <i class="z">0.00</i>   <i class="z">0.00</i>    <i class="z">0.00</i>     <i class="z">0.00</i>    <i class="b">3.00</i>   <i class="b">15.33</i>    <i class="b">0.26</i>   <i class="b">4.80</i></div>
<div class="tl" style="top:694px"><i class="g">sdb</i>              <i class="z">0.00</i>      <i class="z">0.00</i>     <i class="z">0.00</i>   <i class="z">0.00</i>    <i class="z">0.00</i>     <i class="z">0.00</i>   <i class="b">16.00</i>    <i class="b">829.50</i>     <i class="z">0.00</i>   <i class="z">0.00</i>  <i class="b">623.19</i>    <i class="b">51.84</i>    <i class="z">0.00</i>      <i class="z">0.00</i>     <i class="z">0.00</i>   <i class="z">0.00</i>    <i class="z">0.00</i>     <i class="z">0.00</i>    <i class="b">1.00</i>  <i class="b">648.00</i>   <i class="b">10.62</i>  <i class="m">64.40</i></div>
<div class="tl" style="top:709px"></div>
<div class="tl" style="top:724px"></div>
<div class="tl" style="top:739px"><i class="y">avg-cpu:  %user   %nice %system %iowait  %steal   %idle</i></div>
<div class="tl" style="top:754px">           <i class="b">0.88</i>    <i class="z">0.00</i>    <i class="b">0.13</i>   <i class="b">31.58</i>    <i class="z">0.00</i>   <i class="m">67.42</i></div>
<div class="tl" style="top:769px"></div>
<div class="tl" style="top:784px"><i class="y">Device            r/s     rkB/s   rrqm/s  %rrqm r_await rareq-sz     w/s     wkB/s   wrqm/s  %wrqm w_await wareq-sz     d/s     dkB/s   drqm/s  %drqm d_await dareq-sz     f/s f_await  aqu-sz  %util</i></div>
<div class="tl" style="top:799px"><i class="g">md2</i>              <i class="z">0.00</i>      <i class="z">0.00</i>     <i class="z">0.00</i>   <i class="z">0.00</i>    <i class="z">0.00</i>     <i class="z">0.00</i>    <i class="z">0.00</i>      <i class="z">0.00</i>     <i class="z">0.00</i>   <i class="z">0.00</i>    <i class="z">0.00</i>     <i class="z">0.00</i>    <i class="z">0.00</i>      <i class="z">0.00</i>     <i class="z">0.00</i>   <i class="z">0.00</i>    <i class="z">0.00</i>     <i class="z">0.00</i>    <i class="z">0.00</i>    <i class="z">0.00</i>    <i class="z">0.00</i>   <i class="z">0.00</i></div>
<div class="tl" style="top:814px"><i class="g">md3</i>              <i class="z">0.00</i>      <i class="z">0.00</i>     <i class="z">0.00</i>   <i class="z">0.00</i>    <i class="z">0.00</i>     <i class="z">0.00</i>    <i class="b">1.00</i>      <i class="b">4.00</i>     <i class="z">0.00</i>   <i class="z">0.00</i> <i class="b">50908.00</i>     <i class="b">4.00</i>    <i class="z">0.00</i>      <i class="z">0.00</i>     <i class="z">0.00</i>   <i class="z">0.00</i>    <i class="z">0.00</i>     <i class="z">0.00</i>    <i class="z">0.00</i>    <i class="z">0.00</i>   <i class="b">50.91</i> <i class="r">100.00</i></div>
<div class="tl" style="top:829px"><i class="g">sda</i>              <i class="z">0.00</i>      <i class="z">0.00</i>     <i class="z">0.00</i>   <i class="z">0.00</i>    <i class="z">0.00</i>     <i class="z">0.00</i>   <i class="b">12.00</i>    <i class="b">512.00</i>     <i class="z">0.00</i>   <i class="z">0.00</i>   <i class="b">40.83</i>    <i class="b">42.67</i>    <i class="z">0.00</i>      <i class="z">0.00</i>     <i class="z">0.00</i>   <i class="z">0.00</i>    <i class="z">0.00</i>     <i class="z">0.00</i>    <i class="b">1.00</i>   <i class="b">55.00</i>    <i class="b">0.55</i>   <i class="b">5.60</i></div>
<div class="tl" style="top:844px"><i class="g">sdb</i>              <i class="z">0.00</i>      <i class="z">0.00</i>     <i class="z">0.00</i>   <i class="z">0.00</i>    <i class="z">0.00</i>     <i class="z">0.00</i>   <i class="b">12.00</i>    <i class="b">292.00</i>     <i class="z">0.00</i>   <i class="z">0.00</i>  <i class="b">986.08</i>    <i class="b">24.33</i>    <i class="z">0.00</i>      <i class="z">0.00</i>     <i class="z">0.00</i>   <i class="z">0.00</i>    <i class="z">0.00</i>     <i class="z">0.00</i>    <i class="b">2.00</i>  <i class="b">496.50</i>   <i class="b">12.83</i>  <i class="m">59.60</i></div>
<div class="tl" style="top:859px"></div>
<div class="tl" style="top:874px"><i class="y">^C</i></div>
<div class="tl" style="top:889px"><i class="y">root@mougeat:~# </i><i class="cur"> </i></div>
  </div>

  <svg class="a ibeam" style="left:1553px;top:384px" width="10" height="18"><path d="M1 1.5H4M6 1.5H9M1 16.5H4M6 16.5H9M5 2V16" stroke="#dcdcdc" stroke-width="1.2" fill="none"/></svg>
  <div class="a" style="left:0;top:1007px;width:1920px;height:25px;background:#e1e1e1"></div>
  <div class="a" style="left:5px;top:1012px;width:97px;height:20px;background:#f0f0f0;border:1px solid #b8b8b8;border-bottom:none;border-radius:2px 2px 0 0"></div>
  <div class="a" style="left:9px;top:1014px;width:14px;height:14px;border-radius:50%;background:radial-gradient(circle at 40% 35%,#f0f8ff,#9ac4ec);border:1px solid #3a70b0;color:#1a4a9a;font:bold 10px/13px 'Liberation Serif',serif;text-align:center">i</div>
  <div class="t" style="left:27px;top:1017px;font-size:12px;color:#555">Notifications</div>
<div class="a" style="left:0px;top:1032px;width:1920px;height:48px;background:#25271a"></div>
<div class="a" style="left:1305px;top:1032px;width:320px;height:48px;background:radial-gradient(ellipse 150px 70px at 50% 70%,#471a46 0%,#3b1a3a 50%,rgba(37,39,26,0) 100%)"></div>
<div class="a" style="left:21px;top:1045px;width:11px;height:11px;background:linear-gradient(135deg,#7ee8ff,#1aa3ff 70%,#0a8cf0);border-radius:1px"></div>
<div class="a" style="left:33px;top:1045px;width:11px;height:11px;background:linear-gradient(135deg,#7ee8ff,#1aa3ff 70%,#0a8cf0);border-radius:1px"></div>
<div class="a" style="left:21px;top:1057px;width:11px;height:11px;background:linear-gradient(135deg,#7ee8ff,#1aa3ff 70%,#0a8cf0);border-radius:1px"></div>
<div class="a" style="left:33px;top:1057px;width:11px;height:11px;background:linear-gradient(135deg,#7ee8ff,#1aa3ff 70%,#0a8cf0);border-radius:1px"></div>
<div class="a" style="left:58px;top:1041px;width:218px;height:30px;border-radius:15px;background:#f0f0f0;border:1px solid #d8d8d8"></div>
<div class="a" style="left:69px;top:1050px;width:11px;height:11px;border-radius:50%;border:1.6px solid #222"></div>
<div class="a" style="left:78px;top:1062px;width:5px;height:1.8px;background:#222;transform:rotate(45deg)"></div>
<div class="t" style="left:94px;top:1050px;font-size:14px;color:#5c5c5c">Rechercher</div>
<div class="a" style="left:289px;top:1051px;width:18px;height:15px;background:#6a6a6a;border-radius:2px"></div>
<div class="a" style="left:295px;top:1045px;width:18px;height:16px;background:linear-gradient(180deg,#fafafa,#c8c8c8);border-radius:2px"></div>
<div class="a" style="left:295px;top:1051px;width:12px;height:10px;background:#9a9a9a;border-radius:1px"></div>
<div class="a" style="left:334px;top:1044px;width:18px;height:23px;background:linear-gradient(180deg,#f4f4f4 0%,#f4f4f4 25%,#d0f040 45%,#20b020 100%);border:1px solid #ccc"></div>
<div class="a" style="left:350px;top:1044px;width:2px;height:22px;background:#e8a020;transform:rotate(30deg)"></div>
<div class="a" style="left:338px;top:1053px;width:7px;height:2px;background:#222"></div>
<div class="a" style="left:377px;top:1045px;width:10px;height:4px;background:#e8a810;border-radius:2px 2px 0 0"></div>
<div class="a" style="left:377px;top:1048px;width:24px;height:18px;background:linear-gradient(180deg,#ffd65a,#f8c030);border-radius:1px"></div>
<div class="a" style="left:382px;top:1059px;width:14px;height:7px;background:#1a8ce0;border-radius:2px 2px 0 0"></div>
<div class="a" style="left:421px;top:1045px;width:23px;height:22px;border-radius:50%;border:5px solid #e8162a;border-left-width:6px;border-right-width:6px"></div>
<div class="a" style="left:465px;top:1044px;width:24px;height:24px;border-radius:6px;background:#ef3939"></div>
<div class="a" style="left:468px;top:1047px;width:18px;height:18px;border-radius:50%;background:#fff"></div>
<svg class="a" style="left:471px;top:1050px" width="12" height="10"><path d="M1 1L6 9L11 1" stroke="#ef3939" stroke-width="2.5" fill="none"/></svg>
<div class="a" style="left:509px;top:1044px;width:24px;height:24px;background:#4aae3a"></div>
<div class="a" style="left:513px;top:1049px;width:5px;height:4px;background:#000;box-shadow:9px 0 0 #000"></div>
<div class="a" style="left:518px;top:1054px;width:6px;height:8px;background:#000"></div>
<div class="a" style="left:514px;top:1058px;width:14px;height:4px;background:#000;clip-path:polygon(0 0,100% 0,100% 100%,75% 100%,75% 0,25% 0,25% 100%,0 100%)"></div>
<div class="a" style="left:554px;top:1044px;width:23px;height:23px;background:linear-gradient(180deg,#333,#0a0a0a);border-radius:4px;border:1px solid #555"></div>
<div class="t" style="left:557px;top:1053px;font-size:10px;font-weight:bold;color:#2a60e8">m</div>
<div class="t" style="left:565px;top:1049px;font-size:13px;font-weight:bold;color:#ddd">R</div>
<div class="a" style="left:589px;top:1036px;width:40px;height:40px;background:#33332a;border-radius:5px"></div>
<div class="a" style="left:597px;top:1044px;width:24px;height:24px;border-radius:50%;background:conic-gradient(from -60deg,#ea4335 0 120deg,#fbbc04 120deg 240deg,#34a853 240deg 360deg)"></div>
<div class="a" style="left:603px;top:1050px;width:12px;height:12px;border-radius:50%;background:#4285f4;border:2px solid #fff"></div>
<div class="a" style="left:601px;top:1072px;width:16px;height:3px;border-radius:2px;background:#4cc2ff"></div>
<svg class="a" style="left:641px;top:1044px" width="25" height="25"><path d="M4.5 19.5A10 10 0 1 1 8 22.5L2 24Z" fill="none" stroke="#25d366" stroke-width="2.4" stroke-linejoin="round"/><path d="M8.5 7.5C7.5 8.5 7.5 10.5 9.5 13C11.5 15.5 14 17 16 16.5L17 15L15 13.5L13.8 14.5C12.5 14 11 12.5 10.5 11.2L11.5 10L10 8Z" fill="#25d366"/></svg>
<div class="a" style="left:654px;top:1039px;width:16px;height:16px;border-radius:50%;background:#4cc2ff;color:#000;font-size:11px;line-height:16px;text-align:center">2</div>
<div class="a" style="left:685px;top:1044px;width:24px;height:24px;border-radius:50%;background:#0a74da"></div>
<svg class="a" style="left:685px;top:1044px" width="24" height="24"><path d="M12 5C8 6 7 14 9 18M6 10C10 8 17 12 18 15M8 17C12 18 17 12 16 7" stroke="#fff" stroke-width="1.6" fill="none"/></svg>
<div class="a" style="left:729px;top:1047px;width:24px;height:18px;background:#3a3a3a;border-radius:2px;border-top:3px solid #9a9a9a"></div>
<svg class="a" style="left:731px;top:1052px" width="20" height="12"><path d="M2 1L7 5L2 9" stroke="#d8d8d8" stroke-width="2" fill="none"/><rect x="10" y="8" width="7" height="2" fill="#eee"/></svg>
<div class="a" style="left:516px;top:1072px;width:6px;height:3px;border-radius:2px;background:#9c9c90"></div>
<div class="a" style="left:562px;top:1072px;width:6px;height:3px;border-radius:2px;background:#9c9c90"></div>
<div class="a" style="left:650px;top:1072px;width:6px;height:3px;border-radius:2px;background:#9c9c90"></div>
<div class="a" style="left:694px;top:1072px;width:6px;height:3px;border-radius:2px;background:#9c9c90"></div>
<div class="a" style="left:738px;top:1072px;width:6px;height:3px;border-radius:2px;background:#9c9c90"></div>
<div class="a" style="left:1591px;top:1047px;width:20px;height:17px;border-radius:4px;background:linear-gradient(135deg,#4a8cff,#6a5af0)"></div>
<svg class="a" style="left:1597px;top:1051px" width="10" height="10"><path d="M2 1L9 5L2 9Z" fill="#fff"/></svg>
<div class="a" style="left:1600px;top:1038px;width:16px;height:16px;border-radius:50%;background:#c42b1c;color:#fff;font-size:10px;line-height:16px;text-align:center">1</div>
<div class="t" style="left:1621px;top:1042px;font-size:12px;color:#e8e8e8">Trending videos</div>
<div class="t" style="left:1621px;top:1057px;font-size:12px;color:#c8c8c8">Un chat tente d'...</div>
<svg class="a" style="left:1752px;top:1052px" width="12" height="8"><path d="M1 7L6 2L11 7" stroke="#e8e8e8" stroke-width="1.3" fill="none"/></svg>
<svg class="a" style="left:1781px;top:1048px" width="18" height="17"><rect x="1" y="2" width="12" height="10" fill="none" stroke="#e8e8e8" stroke-width="1.2"/><path d="M4 15H11M7 12V15" stroke="#e8e8e8" stroke-width="1.2"/><rect x="12" y="1" width="4" height="4" fill="none" stroke="#e8e8e8"/><path d="M14 5V15" stroke="#e8e8e8"/></svg>
<svg class="a" style="left:1806px;top:1049px" width="18" height="14"><path d="M1 5H4L8 1V13L4 9H1Z" fill="none" stroke="#e8e8e8" stroke-width="1.2"/><path d="M11 4Q13 7 11 10M13.5 2.5Q17 7 13.5 11.5" stroke="#e8e8e8" stroke-width="1.2" fill="none"/></svg>
<div class="t" style="left:1830px;top:1042px;font-size:12px;color:#e8e8e8;width:70px;text-align:right">20:51</div>
<div class="t" style="left:1830px;top:1057px;font-size:12px;color:#e8e8e8;width:70px;text-align:right">27/11/2025</div>
</div>
<div id="R">
<div class="a" style="left:0;top:0;width:1440px;height:52px;background:#fbdac8"></div>
<div class="a" style="left:6px;top:6px;width:28px;height:28px;border-radius:9px;background:#fff"></div>
<svg class="a" style="left:15px;top:17px" width="10" height="7"><path d="M1 1L5 5L9 1" stroke="#222" stroke-width="1.6" fill="none"/></svg>
<div class="a" style="left:48px;top:12px;width:16px;height:16px;background:#fff"></div>
<div class="a" style="left:48px;top:12px;width:16px;height:16px;border-radius:50%;border:1.3px solid #333"></div>
<div class="t" style="left:51px;top:14px;font-size:10px;font-weight:bold;color:#333">M</div>
<div class="a" style="left:72px;top:11px;width:100px;height:18px;overflow:hidden"><div class="t" style="left:0;top:4px;font-size:12px;color:#3c3c3c">mougeat.fr</div><div class="a" style="right:0;top:0;width:24px;height:18px;background:linear-gradient(90deg,rgba(251,218,200,0),#fbdac8)"></div></div>
<svg class="a" style="left:182px;top:15px" width="10" height="10"><path d="M1 1L9 9M9 1L1 9" stroke="#333" stroke-width="1.4"/></svg>
<div class="a" style="left:206px;top:12px;width:2px;height:16px;background:#fff;opacity:.9"></div>
<div class="a" style="left:217px;top:12px;width:16px;height:16px;background:#3b3f4a"></div>
<div class="t" style="left:221px;top:14px;font-size:11px;font-weight:bold;color:#fff">Y</div>
<div class="a" style="left:241px;top:11px;width:100px;height:18px;overflow:hidden"><div class="t" style="left:0;top:4px;font-size:12px;color:#3c3c3c">Liste des applicatio</div><div class="a" style="right:0;top:0;width:24px;height:18px;background:linear-gradient(90deg,rgba(251,218,200,0),#fbdac8)"></div></div>
<svg class="a" style="left:351px;top:15px" width="10" height="10"><path d="M1 1L9 9M9 1L1 9" stroke="#333" stroke-width="1.4"/></svg>
<div class="a" style="left:375px;top:12px;width:2px;height:16px;background:#fff;opacity:.9"></div>
<div class="a" style="left:386px;top:12px;width:16px;height:16px;background:#fff"></div>
<div class="a" style="left:387px;top:14px;width:14px;height:12px;background:repeating-linear-gradient(90deg,#111 0 2px,#fff 2px 3px)"></div>
<div class="a" style="left:410px;top:11px;width:100px;height:18px;overflow:hidden"><div class="t" style="left:0;top:4px;font-size:12px;color:#3c3c3c">monitorix / Applica</div><div class="a" style="right:0;top:0;width:24px;height:18px;background:linear-gradient(90deg,rgba(251,218,200,0),#fbdac8)"></div></div>
<svg class="a" style="left:520px;top:15px" width="10" height="10"><path d="M1 1L9 9M9 1L1 9" stroke="#333" stroke-width="1.4"/></svg>
<div class="a" style="left:544px;top:12px;width:2px;height:16px;background:#fff;opacity:.9"></div>
<div class="a" style="left:555px;top:12px;width:16px;height:16px;border-radius:50%;border:2px dotted #333"></div>
<div class="a" style="left:579px;top:11px;width:100px;height:18px;overflow:hidden"><div class="t" style="left:0;top:4px;font-size:12px;color:#3c3c3c">Analyse ressources</div><div class="a" style="right:0;top:0;width:24px;height:18px;background:linear-gradient(90deg,rgba(251,218,200,0),#fbdac8)"></div></div>
<svg class="a" style="left:689px;top:15px" width="10" height="10"><path d="M1 1L9 9M9 1L1 9" stroke="#333" stroke-width="1.4"/></svg>
<div class="a" style="left:713px;top:12px;width:2px;height:16px;background:#fff;opacity:.9"></div>
<div class="a" style="left:725px;top:12px;width:16px;height:16px;border-radius:50%;background:#fff"></div>
<svg class="a" style="left:727px;top:15px" width="12" height="10"><path d="M0 1L3 9H6L4 4ZM5 1L8 9L12 1H9L8 4L7 1Z" fill="#000e9c"/></svg>
<div class="a" style="left:749px;top:11px;width:100px;height:18px;overflow:hidden"><div class="t" style="left:0;top:4px;font-size:12px;color:#3c3c3c">OVHcloud</div><div class="a" style="right:0;top:0;width:24px;height:18px;background:linear-gradient(90deg,rgba(251,218,200,0),#fbdac8)"></div></div>
<svg class="a" style="left:859px;top:15px" width="10" height="10"><path d="M1 1L9 9M9 1L1 9" stroke="#333" stroke-width="1.4"/></svg>
<div class="a" style="left:883px;top:12px;width:2px;height:16px;background:#fff;opacity:.9"></div>
<div class="a" style="left:894px;top:12px;width:16px;height:16px;border-radius:50%;background:#fff"></div>
<svg class="a" style="left:896px;top:15px" width="12" height="10"><path d="M0 1L3 9H6L4 4ZM5 1L8 9L12 1H9L8 4L7 1Z" fill="#000e9c"/></svg>
<div class="a" style="left:918px;top:11px;width:100px;height:18px;overflow:hidden"><div class="t" style="left:0;top:4px;font-size:12px;color:#3c3c3c">OVHcloud</div><div class="a" style="right:0;top:0;width:24px;height:18px;background:linear-gradient(90deg,rgba(251,218,200,0),#fbdac8)"></div></div>
<svg class="a" style="left:1028px;top:15px" width="10" height="10"><path d="M1 1L9 9M9 1L1 9" stroke="#333" stroke-width="1.4"/></svg>
<div class="a" style="left:1052px;top:12px;width:2px;height:16px;background:#fff;opacity:.9"></div>
<div class="a" style="left:1052px;top:6px;width:163px;height:35px;background:#fff;border-radius:10px 10px 0 0"></div>
<svg class="a" style="left:1042px;top:30px" width="10" height="11"><path d="M10 0L10 11L0 11L0 10A10 10 0 0 0 10 0Z" fill="#fff"/></svg>
<svg class="a" style="left:1215px;top:30px" width="10" height="11"><path d="M0 0L0 11L10 11L10 10A10 10 0 0 1 0 0Z" fill="#fff"/></svg>
<svg class="a" style="left:1061px;top:15px" width="18" height="10"><path d="M0 1L4 9H8L5 3ZM7 1L10 9L15 1H11L10 4L9 1Z" fill="#000e9c"/></svg>
<div class="a" style="left:1085px;top:11px;width:100px;height:18px;overflow:hidden"><div class="t" style="left:0;top:4px;font-size:12px;color:#1f1f1f">Créer un ticket - Support</div><div class="a" style="right:0;top:0;width:24px;height:18px;background:linear-gradient(90deg,rgba(255,255,255,0),#fff)"></div></div>
<svg class="a" style="left:1194px;top:15px" width="10" height="10"><path d="M1 1L9 9M9 1L1 9" stroke="#111" stroke-width="1.5"/></svg>
<svg class="a" style="left:1229px;top:14px" width="12" height="12"><path d="M6 0V12M0 6H12" stroke="#555" stroke-width="1.3"/></svg>
<div class="a" style="left:1320px;top:19px;width:10px;height:1px;background:#555"></div>
<div class="a" style="left:1366px;top:16px;width:8px;height:8px;border:1px solid #777;border-radius:1px"></div>
<div class="a" style="left:1368px;top:14px;width:8px;height:8px;border-top:1px solid #777;border-right:1px solid #777"></div>
<svg class="a" style="left:1412px;top:15px" width="11" height="11"><path d="M0.5 0.5L10.5 10.5M10.5 0.5L0.5 10.5" stroke="#555" stroke-width="1.1"/></svg>
<div class="a" style="left:0;top:40px;width:1440px;height:81px;background:#fff;border-radius:10px 0 0 0;border-bottom:1px solid #dadada"></div>
<svg class="a" style="left:14px;top:57px" width="14" height="13"><path d="M13 6.5H2M7 1L1.5 6.5L7 12" stroke="#8a8a8a" stroke-width="1.5" fill="none"/></svg>
<svg class="a" style="left:51px;top:57px" width="14" height="13"><path d="M1 6.5H12M7 1L12.5 6.5L7 12" stroke="#8a8a8a" stroke-width="1.5" fill="none"/></svg>
<svg class="a" style="left:87px;top:56px" width="15" height="15"><path d="M12.5 7.5A5 5 0 1 1 10.5 3.5" stroke="#222" stroke-width="1.6" fill="none"/><path d="M9 1H13V5" stroke="#222" stroke-width="1.6" fill="none"/></svg>
<div class="a" style="left:120px;top:46px;width:1074px;height:34px;border-radius:17px;background:#e0e0e0"></div>
<div class="a" style="left:125px;top:51px;width:24px;height:24px;border-radius:50%;background:#fff"></div>
<svg class="a" style="left:130px;top:57px" width="14" height="12"><circle cx="3" cy="3" r="2" stroke="#333" fill="none" stroke-width="1.3"/><path d="M6 3H13M1 9H8" stroke="#333" stroke-width="1.3"/><circle cx="11" cy="9" r="2" stroke="#333" fill="none" stroke-width="1.3"/></svg>
<div class="t" style="left:157px;top:55px;font-size:14px;color:#1f1f1f">help.ovhcloud.com<span style="color:#5f6368">/csm?id=csm_get_help&amp;ovhSubsidiary=FR</span></div>
<svg class="a" style="left:1162px;top:55px" width="16" height="16"><path d="M8 1L10 6H15L11 9L12.5 14.5L8 11.5L3.5 14.5L5 9L1 6H6Z" stroke="#444" stroke-width="1.3" fill="none"/></svg>
<svg class="a" style="left:1212px;top:56px" width="24" height="22"><path d="M1 3H17V14H14V7L9 11L4 7V14H1Z" fill="#d0191f"/><rect x="6" y="9" width="14" height="12" rx="3" fill="#d0191f"/><text x="7" y="19" font-size="9.5" font-weight="bold" fill="#fff" font-family="Liberation Sans">22</text></svg>
<svg class="a" style="left:1248px;top:55px" width="17" height="17"><rect x="0" y="0" width="16" height="16" rx="1.5" fill="#175ddc"/><path d="M3 2H13V9C13 12 8 15 8 15C8 15 3 12 3 9Z" fill="#fff"/><path d="M8 2H13V9C13 12 8 15 8 15Z" fill="#175ddc"/><rect x="9" y="10" width="6" height="5" rx="1" fill="#666"/><path d="M10 10V8.5A2 2 0 0 1 14 8.5V10" stroke="#666" fill="none"/></svg>
<svg class="a" style="left:1284px;top:55px" width="17" height="17"><rect x="0" y="0" width="16" height="16" rx="3" fill="#1b4a5e"/><path d="M3 3H8V13H3Z" fill="#f4f4e0"/><path d="M6 4L13 6L9 9L13 12H6Z" fill="#3ac0e0"/><path d="M8 7L12 8L9 9Z" fill="#f0b020"/></svg>
<svg class="a" style="left:1320px;top:55px" width="17" height="17"><path d="M2 4H6V2.5A1.5 1.5 0 0 1 9 2.5V4H13V8H14.5A1.5 1.5 0 0 1 14.5 11H13V15H2V11.5H3.5A1.5 1.5 0 0 0 3.5 8.5H2Z" stroke="#111" stroke-width="1.5" fill="none"/></svg>
<div class="a" style="left:1354px;top:55px;width:1.5px;height:16px;background:#f8c8b0"></div>
<div class="a" style="left:1372px;top:53px;width:20px;height:20px;border-radius:50%;background:linear-gradient(90deg,#d8e0e8 0%,#b8c8d8 45%,#f0e8c0 55%,#2a2418 62%,#1a1408 100%)"></div>
<div class="a" style="left:1416px;top:56px;width:3px;height:3px;border-radius:50%;background:#222;box-shadow:0 5px 0 #222,0 10px 0 #222"></div>
<div class="a" style="left:13px;top:93px;width:6px;height:6px;border:1.6px solid #222"></div>
<div class="a" style="left:21px;top:93px;width:6px;height:6px;border:1.6px solid #222"></div>
<div class="a" style="left:13px;top:101px;width:6px;height:6px;border:1.6px solid #222"></div>
<div class="a" style="left:21px;top:101px;width:6px;height:6px;border:1.6px solid #222"></div>
<div class="a" style="left:42px;top:93px;width:1.5px;height:15px;background:#f0b8a0"></div>
<svg width="0" height="0" style="position:absolute"><defs><radialGradient id="gball" cx="40%" cy="30%"><stop offset="0" stop-color="#e060f0"/><stop offset="1" stop-color="#5080f0"/></radialGradient></defs></svg>
<svg class="a" style="left:57px;top:92px" width="16" height="16" viewBox="0 0 16 16"><text x="1" y="14" font-size="15" font-weight="bold" fill="#f5b800" font-family="Liberation Sans">C</text><path d="M12 1L11 6" stroke="#f5b800" stroke-width="2"/></svg>
<svg class="a" style="left:90px;top:92px" width="16" height="16" viewBox="0 0 16 16"><path d="M6 3L15 1V12L6 13Z" fill="#f7d000"/><rect x="6" y="11" width="9" height="3" fill="#8fd8e8"/><circle cx="5" cy="11" r="4" fill="none" stroke="#2a3a7a" stroke-width="1.3"/><path d="M1 11H9" stroke="#2a3a7a"/></svg>
<svg class="a" style="left:122px;top:92px" width="16" height="16" viewBox="0 0 16 16"><path d="M8 0L15 2V8C15 12 11 15 8 16C5 15 1 12 1 8V2Z" fill="#68b868"/><path d="M4.5 8L7 10.5L11.5 5.5" stroke="#fff" stroke-width="1.8" fill="none"/></svg>
<svg class="a" style="left:154px;top:92px" width="16" height="16" viewBox="0 0 16 16"><rect x="0" y="0" width="16" height="16" rx="2" fill="#1a7ef0"/><text x="1" y="11" font-size="7" font-weight="bold" fill="#fff" font-family="Liberation Sans">DSM</text></svg>
<svg class="a" style="left:186px;top:92px" width="16" height="16" viewBox="0 0 16 16"><path d="M2 7V9M4 5V9M6 6V9M8 4V9M10 6V9M12 5V9M14 7V9" stroke="#3aa0d8" stroke-width="1"/><text x="2" y="14" font-size="4.5" fill="#3aa0d8" font-family="Liberation Sans">CISCO</text></svg>
<svg class="a" style="left:218px;top:92px" width="16" height="16" viewBox="0 0 16 16"><circle cx="8" cy="8" r="7.5" fill="#1a1a1a"/><path d="M4 4C7 5 6 8 9 9C11 10 10 13 12 14M10 2C10 4 12 5 14 5" stroke="#fff" stroke-width="1.6" fill="none"/></svg>
<svg class="a" style="left:270px;top:92px" width="16" height="16" viewBox="0 0 16 16"><text x="0" y="7" font-size="6.5" font-weight="bold" fill="#111" font-family="Liberation Sans">YUNO</text><text x="0" y="14" font-size="6.5" font-weight="bold" fill="#111" font-family="Liberation Sans">HOST</text></svg>
<svg class="a" style="left:303px;top:92px" width="16" height="16" viewBox="0 0 16 16"><circle cx="8" cy="8" r="7" fill="#fff" stroke="#333" stroke-width="1.2"/><path d="M4 4L8 11L12 4M5 13V8M11 13V8" stroke="#333" stroke-width="1.3" fill="none"/></svg>
<svg class="a" style="left:334px;top:92px" width="16" height="16" viewBox="0 0 16 16"><path d="M9 1C5 1 5 5 9 6C13 8 12 15 8 15C4 15 4 9 8 7C11 5 11 2 8 2" stroke="#c02030" stroke-width="1.8" fill="none"/></svg>
<svg class="a" style="left:366px;top:92px" width="16" height="16" viewBox="0 0 16 16"><path d="M7 1C9 5 13 8 12 12C11 15 5 16 3 12C2 9 5 8 6 5C7 7 8 8 8 10" fill="#e02828"/></svg>
<svg class="a" style="left:399px;top:92px" width="16" height="16" viewBox="0 0 16 16"><circle cx="8" cy="8" r="7.5" fill="#3a8a1a"/><text x="2" y="14" font-size="13" font-weight="bold" fill="#f0c020" stroke="#222" stroke-width="0.6" font-family="Liberation Serif">B</text></svg>
<svg class="a" style="left:431px;top:92px" width="16" height="16" viewBox="0 0 16 16"><circle cx="8" cy="8" r="7.5" fill="url(#gball)"/></svg>
<svg class="a" style="left:463px;top:92px" width="16" height="16" viewBox="0 0 16 16"><circle cx="8" cy="10" r="6" fill="#444"/><rect x="4" y="1" width="8" height="10" rx="1" fill="#f4f4f4" stroke="#ccc" stroke-width="0.5"/><rect x="5" y="8" width="6" height="2" fill="#d44"/></svg>
<svg class="a" style="left:495px;top:92px" width="16" height="16" viewBox="0 0 16 16"><ellipse cx="8" cy="8" rx="8" ry="5" fill="#e8dcb8" stroke="#c8bc98" stroke-width="0.5"/></svg>
<svg class="a" style="left:527px;top:92px" width="16" height="16" viewBox="0 0 16 16"><path d="M8 0L16 7V16H0V7Z" fill="#18bcf2"/><path d="M8 5V15M8 10L5 7M8 12L11 9" stroke="#fff" stroke-width="1.2"/><circle cx="5" cy="7" r="1" fill="#fff"/><circle cx="11" cy="9" r="1" fill="#fff"/></svg>
<svg class="a" style="left:559px;top:92px" width="16" height="16" viewBox="0 0 16 16"><circle cx="7" cy="8" r="6.5" fill="#4466aa"/><rect x="3" y="4" width="8" height="4" fill="#fff"/><path d="M9 10H15L12 7M15 10L12 13" stroke="#e04020" stroke-width="1.6" fill="none"/></svg>
<svg class="a" style="left:591px;top:92px" width="16" height="16" viewBox="0 0 16 16"><rect width="16" height="16" fill="#f5a800"/><path d="M3 12C5 9 9 10 13 13M5 6C6 3 10 3 10 6C10 8 7 9 5 8" fill="#111" stroke="#111" stroke-width="1.5"/></svg>
<svg class="a" style="left:623px;top:92px" width="16" height="16" viewBox="0 0 16 16"><circle cx="8" cy="8" r="7.5" fill="#f05a14"/><circle cx="8" cy="8" r="4.5" fill="#fff"/><circle cx="8" cy="8" r="2.8" fill="#333"/></svg>
<svg class="a" style="left:655px;top:92px" width="16" height="16" viewBox="0 0 16 16"><rect width="16" height="16" rx="2" fill="#111"/><path d="M5 5H11V11H5ZM8 11L5 13H11" stroke="#fff" stroke-width="1.6" fill="none"/></svg>
<svg class="a" style="left:687px;top:92px" width="16" height="16" viewBox="0 0 16 16"><path d="M2 15L6 10V4H13V9H9V15Z" fill="#e88a9a"/><circle cx="11" cy="6" r="1.2" fill="#fff"/></svg>
<svg class="a" style="left:719px;top:92px" width="16" height="16" viewBox="0 0 16 16"><rect x="0" y="0" width="8" height="16" fill="#8a90d8"/><path d="M8 1L15 8L8 15L1 8Z" fill="#f8d860" stroke="#888" stroke-width="0.6"/></svg>
<svg class="a" style="left:751px;top:92px" width="16" height="16" viewBox="0 0 16 16"><rect width="16" height="16" fill="#f0c8a0"/><rect width="16" height="4" fill="#333"/><circle cx="5" cy="8" r="2" fill="#fff" stroke="#333"/><circle cx="11" cy="8" r="2" fill="#fff" stroke="#333"/></svg>
<svg class="a" style="left:783px;top:92px" width="16" height="16" viewBox="0 0 16 16"><rect width="16" height="16" fill="#f4f4f4"/><text x="0" y="12" font-size="8.5" font-style="italic" font-weight="bold" fill="#cc0000" font-family="Liberation Sans">free</text></svg>
<svg class="a" style="left:815px;top:92px" width="16" height="16" viewBox="0 0 16 16"><path d="M2 10C4 15 13 15 15 10" stroke="#f0a020" stroke-width="2.2" fill="none"/><path d="M3 6C5 1 12 1 14 5" stroke="#1a70d0" stroke-width="2.2" fill="none"/><circle cx="8" cy="8" r="2.2" fill="#1a70d0"/></svg>
<svg class="a" style="left:847px;top:92px" width="16" height="16" viewBox="0 0 16 16"><rect width="16" height="16" fill="#d01a1a"/><path d="M3 10C6 6 9 4 13 2M5 13C8 9 10 8 13 7" stroke="#fff" stroke-width="1.3" fill="none"/></svg>
<svg class="a" style="left:879px;top:92px" width="16" height="16" viewBox="0 0 16 16"><rect width="16" height="16" fill="#6a2a9a"/><path d="M9 2C11 5 11 8 7 9M5 12C7 14 11 13 12 10" stroke="#fff" stroke-width="2" fill="none"/></svg>
<svg class="a" style="left:911px;top:92px" width="16" height="16" viewBox="0 0 16 16"><path d="M8 0L15 4V12L8 16L1 12V4Z" fill="#142e4a"/><path d="M5 8L11 5M5 8L11 11" stroke="#fff" stroke-width="1.2"/></svg>
<svg class="a" style="left:943px;top:92px" width="16" height="16" viewBox="0 0 16 16"><path d="M8 0C11 4 14 7 13 11C12 15 4 16 3 11C2 8 5 5 6 2C7 4 8 5 8 6Z" fill="#e83818"/><circle cx="8" cy="11" r="2.5" fill="#fff"/></svg>
<svg class="a" style="left:975px;top:92px" width="16" height="16" viewBox="0 0 16 16"><rect width="16" height="16" fill="#f06018"/><path d="M3 12V4L8 9L13 4V12" stroke="#fff" stroke-width="2" fill="none"/></svg>
<svg class="a" style="left:1007px;top:92px" width="16" height="16" viewBox="0 0 16 16"><circle cx="8" cy="8" r="6" fill="none" stroke="#333" stroke-width="1.4" stroke-dasharray="3 1.2"/><circle cx="8" cy="8" r="3" fill="none" stroke="#333" stroke-width="1.2"/></svg>
<div class="t" style="left:239px;top:93px;font-size:13px;color:#1f1f1f">AP</div>
<svg class="a" style="left:1040px;top:93px" width="17" height="14"><path d="M1 2H6L8 4H16V13H1Z" stroke="#444" stroke-width="1.3" fill="none"/></svg>
<div class="t" style="left:1065px;top:93px;font-size:13px;color:#1f1f1f">Favoris</div>
<div class="a" style="left:1122px;top:93px;width:10px;height:14px;border-radius:50%;border:2px solid #2a8a3a;border-left-color:transparent"></div>
<svg class="a" style="left:1148px;top:92px" width="16" height="16"><path d="M3 14C6 8 4 3 9 3C13 3 12 9 6 9C11 9 14 12 12 15" stroke="#e0303a" stroke-width="1.6" fill="none"/></svg>
<div class="t" style="left:1172px;top:93px;font-size:13px;color:#1f1f1f">Classe</div>
<div class="a" style="left:1226px;top:94px;width:3px;height:3px;background:#e04040;box-shadow:5px 0 0 #f0c000,0 5px 0 #40a040,5px 5px 0 #4080e0,0 10px 0 #e08040,5px 10px 0 #a040e0"></div>
<div class="a" style="left:1253px;top:92px;width:16px;height:16px;border-radius:50%;background:#c89a6a"></div>
<div class="t" style="left:1275px;top:93px;font-size:13px;color:#1f1f1f">Panier</div>
<svg class="a" style="left:1398px;top:95px" width="12" height="10"><path d="M1 1L5 5L1 9M6 1L10 5L6 9" stroke="#222" stroke-width="1.5" fill="none"/></svg>
<div class="a" style="left:0;top:121px;width:1440px;height:731px;background:#fff"></div>
<div class="a" style="left:0;top:121px;width:1425px;height:135px;overflow:hidden"><div class="a" style="left:146px;top:-20px;width:834px;height:155px;border:1.5px solid #7fd3f3;border-radius:0 0 5px 5px"></div></div>
<div class="t" style="left:146px;top:275px;font-size:13px;font-weight:bold;color:#4b5495">Quel est le résultat des tests smartctl ?</div>
<div class="a" style="left:146px;top:297px;width:834px;height:206px;border:1.5px solid #7fd3f3;border-radius:4px"></div>
<div class="t ta" style="left:159px;top:305px">SMART <u>Selective</u> <u>self-test</u> log data structure <u>revision</u> <u>number</u> 1</div>
<div class="t ta" style="left:159px;top:325px"> SPAN  MIN_LBA  MAX_LBA  CURRENT_TEST_STATUS</div>
<div class="t ta" style="left:159px;top:345px">    1        0        0  <u>Not_testing</u></div>
<div class="t ta" style="left:159px;top:365px">    2        0        0  <u>Not_testing</u></div>
<div class="t ta" style="left:159px;top:385px">    3        0        0  <u>Not_testing</u></div>
<div class="t ta" style="left:159px;top:405px">    4        0        0  <u>Not_testing</u></div>
<div class="t ta" style="left:159px;top:425px">    5        0        0  <u>Not_testing</u></div>
<div class="t ta" style="left:159px;top:445px"><u>Selective</u> <u>self-test</u> flags (0x0):</div>
<div class="t ta" style="left:159px;top:465px">  <u>After</u> scanning <u>selected</u> <u>spans</u>, do NOT <u>read-scan</u> <u>remainder</u> of <u>disk</u>.</div>
<div class="t ta" style="left:159px;top:485px">If <u>Selective</u> <u>self-test</u> is <u>pending</u> on <u>power-up</u>, <u>resume</u> after 0 minute <u>delay</u>.</div>
<svg class="a" style="left:968px;top:307px" width="9" height="6"><path d="M0 6L4.5 0L9 6Z" fill="#777"/></svg>
<div class="a" style="left:968px;top:463px;width:8px;height:17px;border-radius:4px;background:#888"></div>
<svg class="a" style="left:968px;top:491px" width="9" height="6"><path d="M0 0L4.5 6L9 0Z" fill="#777"/></svg>
<div class="a" style="left:146px;top:539px;width:834px;height:162px;border:2px solid #7fd3f3;border-radius:6px"></div>
<div class="a" style="left:548px;top:580px;width:30px;height:30px;border-radius:50%;border:2px solid #0050d7"></div>
<svg class="a" style="left:556px;top:587px" width="14" height="16"><path d="M1 1H8L12 5V15H1Z M8 1V5H12" stroke="#0050d7" stroke-width="1.4" fill="none"/></svg>
<div class="t" style="left:279px;top:633px;font-size:13px;font-weight:bold;color:#4b5495">Ajoutez vos documents par glisser-déposer ou sélectionnez un fichier. <span style="color:#2f6fd8">sélectionner un fichier</span></div>
<div class="a" style="left:128px;top:762px;width:101px;height:38px;border:2px solid #0050d7;border-radius:4px;background:#fff"></div>
<div class="t" style="left:128px;top:774px;width:101px;text-align:center;font-size:14px;font-weight:bold;color:#0050d7">Précédent</div>
<div class="a" style="left:239px;top:762px;width:131px;height:38px;border-radius:4px;background:#0050d7"></div>
<div class="t" style="left:239px;top:774px;width:131px;text-align:center;font-size:14px;font-weight:bold;color:#fff">Confirmer</div>
<div class="a" style="left:1425px;top:121px;width:15px;height:731px;background:#fafafa"></div>
<svg class="a" style="left:1428px;top:126px" width="9" height="6"><path d="M0 6L4.5 0L9 6Z" fill="#888"/></svg>
<svg class="a" style="left:1428px;top:842px" width="9" height="6"><path d="M0 0L4.5 6L9 0Z" fill="#888"/></svg>
<div class="a" style="left:1428px;top:499px;width:9px;height:179px;border-radius:5px;background:#8a8a8a"></div>
<div class="a" style="left:0px;top:852px;width:1440px;height:48px;background:#25271a"></div>
<div class="a" style="left:990px;top:852px;width:320px;height:48px;background:radial-gradient(ellipse 150px 70px at 50% 70%,#471a46 0%,#3b1a3a 50%,rgba(37,39,26,0) 100%)"></div>
<div class="a" style="left:21px;top:865px;width:11px;height:11px;background:linear-gradient(135deg,#7ee8ff,#1aa3ff 70%,#0a8cf0);border-radius:1px"></div>
<div class="a" style="left:33px;top:865px;width:11px;height:11px;background:linear-gradient(135deg,#7ee8ff,#1aa3ff 70%,#0a8cf0);border-radius:1px"></div>
<div class="a" style="left:21px;top:877px;width:11px;height:11px;background:linear-gradient(135deg,#7ee8ff,#1aa3ff 70%,#0a8cf0);border-radius:1px"></div>
<div class="a" style="left:33px;top:877px;width:11px;height:11px;background:linear-gradient(135deg,#7ee8ff,#1aa3ff 70%,#0a8cf0);border-radius:1px"></div>
<div class="a" style="left:58px;top:861px;width:218px;height:30px;border-radius:15px;background:#f0f0f0;border:1px solid #d8d8d8"></div>
<div class="a" style="left:69px;top:870px;width:11px;height:11px;border-radius:50%;border:1.6px solid #222"></div>
<div class="a" style="left:78px;top:882px;width:5px;height:1.8px;background:#222;transform:rotate(45deg)"></div>
<div class="t" style="left:94px;top:870px;font-size:14px;color:#5c5c5c">Rechercher</div>
<div class="a" style="left:289px;top:871px;width:18px;height:15px;background:#6a6a6a;border-radius:2px"></div>
<div class="a" style="left:295px;top:865px;width:18px;height:16px;background:linear-gradient(180deg,#fafafa,#c8c8c8);border-radius:2px"></div>
<div class="a" style="left:295px;top:871px;width:12px;height:10px;background:#9a9a9a;border-radius:1px"></div>
<div class="a" style="left:334px;top:864px;width:18px;height:23px;background:linear-gradient(180deg,#f4f4f4 0%,#f4f4f4 25%,#d0f040 45%,#20b020 100%);border:1px solid #ccc"></div>
<div class="a" style="left:350px;top:864px;width:2px;height:22px;background:#e8a020;transform:rotate(30deg)"></div>
<div class="a" style="left:338px;top:873px;width:7px;height:2px;background:#222"></div>
<div class="a" style="left:377px;top:865px;width:10px;height:4px;background:#e8a810;border-radius:2px 2px 0 0"></div>
<div class="a" style="left:377px;top:868px;width:24px;height:18px;background:linear-gradient(180deg,#ffd65a,#f8c030);border-radius:1px"></div>
<div class="a" style="left:382px;top:879px;width:14px;height:7px;background:#1a8ce0;border-radius:2px 2px 0 0"></div>
<div class="a" style="left:421px;top:865px;width:23px;height:22px;border-radius:50%;border:5px solid #e8162a;border-left-width:6px;border-right-width:6px"></div>
<div class="a" style="left:465px;top:864px;width:24px;height:24px;border-radius:6px;background:#ef3939"></div>
<div class="a" style="left:468px;top:867px;width:18px;height:18px;border-radius:50%;background:#fff"></div>
<svg class="a" style="left:471px;top:870px" width="12" height="10"><path d="M1 1L6 9L11 1" stroke="#ef3939" stroke-width="2.5" fill="none"/></svg>
<div class="a" style="left:509px;top:864px;width:24px;height:24px;background:#4aae3a"></div>
<div class="a" style="left:513px;top:869px;width:5px;height:4px;background:#000;box-shadow:9px 0 0 #000"></div>
<div class="a" style="left:518px;top:874px;width:6px;height:8px;background:#000"></div>
<div class="a" style="left:514px;top:878px;width:14px;height:4px;background:#000;clip-path:polygon(0 0,100% 0,100% 100%,75% 100%,75% 0,25% 0,25% 100%,0 100%)"></div>
<div class="a" style="left:554px;top:864px;width:23px;height:23px;background:linear-gradient(180deg,#333,#0a0a0a);border-radius:4px;border:1px solid #555"></div>
<div class="t" style="left:557px;top:873px;font-size:10px;font-weight:bold;color:#2a60e8">m</div>
<div class="t" style="left:565px;top:869px;font-size:13px;font-weight:bold;color:#ddd">R</div>
<div class="a" style="left:589px;top:856px;width:40px;height:40px;background:#33332a;border-radius:5px"></div>
<div class="a" style="left:597px;top:864px;width:24px;height:24px;border-radius:50%;background:conic-gradient(from -60deg,#ea4335 0 120deg,#fbbc04 120deg 240deg,#34a853 240deg 360deg)"></div>
<div class="a" style="left:603px;top:870px;width:12px;height:12px;border-radius:50%;background:#4285f4;border:2px solid #fff"></div>
<div class="a" style="left:601px;top:892px;width:16px;height:3px;border-radius:2px;background:#4cc2ff"></div>
<svg class="a" style="left:641px;top:864px" width="25" height="25"><path d="M4.5 19.5A10 10 0 1 1 8 22.5L2 24Z" fill="none" stroke="#25d366" stroke-width="2.4" stroke-linejoin="round"/><path d="M8.5 7.5C7.5 8.5 7.5 10.5 9.5 13C11.5 15.5 14 17 16 16.5L17 15L15 13.5L13.8 14.5C12.5 14 11 12.5 10.5 11.2L11.5 10L10 8Z" fill="#25d366"/></svg>
<div class="a" style="left:654px;top:859px;width:16px;height:16px;border-radius:50%;background:#4cc2ff;color:#000;font-size:11px;line-height:16px;text-align:center">2</div>
<div class="a" style="left:685px;top:864px;width:24px;height:24px;border-radius:50%;background:#0a74da"></div>
<svg class="a" style="left:685px;top:864px" width="24" height="24"><path d="M12 5C8 6 7 14 9 18M6 10C10 8 17 12 18 15M8 17C12 18 17 12 16 7" stroke="#fff" stroke-width="1.6" fill="none"/></svg>
<div class="a" style="left:729px;top:867px;width:24px;height:18px;background:#3a3a3a;border-radius:2px;border-top:3px solid #9a9a9a"></div>
<svg class="a" style="left:731px;top:872px" width="20" height="12"><path d="M2 1L7 5L2 9" stroke="#d8d8d8" stroke-width="2" fill="none"/><rect x="10" y="8" width="7" height="2" fill="#eee"/></svg>
<div class="a" style="left:516px;top:892px;width:6px;height:3px;border-radius:2px;background:#9c9c90"></div>
<div class="a" style="left:562px;top:892px;width:6px;height:3px;border-radius:2px;background:#9c9c90"></div>
<div class="a" style="left:650px;top:892px;width:6px;height:3px;border-radius:2px;background:#9c9c90"></div>
<div class="a" style="left:694px;top:892px;width:6px;height:3px;border-radius:2px;background:#9c9c90"></div>
<div class="a" style="left:738px;top:892px;width:6px;height:3px;border-radius:2px;background:#9c9c90"></div>
<div class="a" style="left:1199px;top:867px;width:20px;height:17px;border-radius:4px;background:linear-gradient(135deg,#4a8cff,#6a5af0)"></div>
<svg class="a" style="left:1205px;top:871px" width="10" height="10"><path d="M2 1L9 5L2 9Z" fill="#fff"/></svg>
<div class="a" style="left:1208px;top:858px;width:16px;height:16px;border-radius:50%;background:#c42b1c;color:#fff;font-size:10px;line-height:16px;text-align:center">1</div>
<div class="t" style="left:1229px;top:862px;font-size:12px;color:#e8e8e8">Trending videos</div>
<div class="t" style="left:1229px;top:877px;font-size:12px;color:#c8c8c8">Un chat tente d'...</div>
<div class="t" style="left:1350px;top:862px;font-size:12px;color:#e8e8e8;width:70px;text-align:right">20:51</div>
<div class="t" style="left:1350px;top:877px;font-size:12px;color:#e8e8e8;width:70px;text-align:right">27/11/2025</div>
</div></body></html>
